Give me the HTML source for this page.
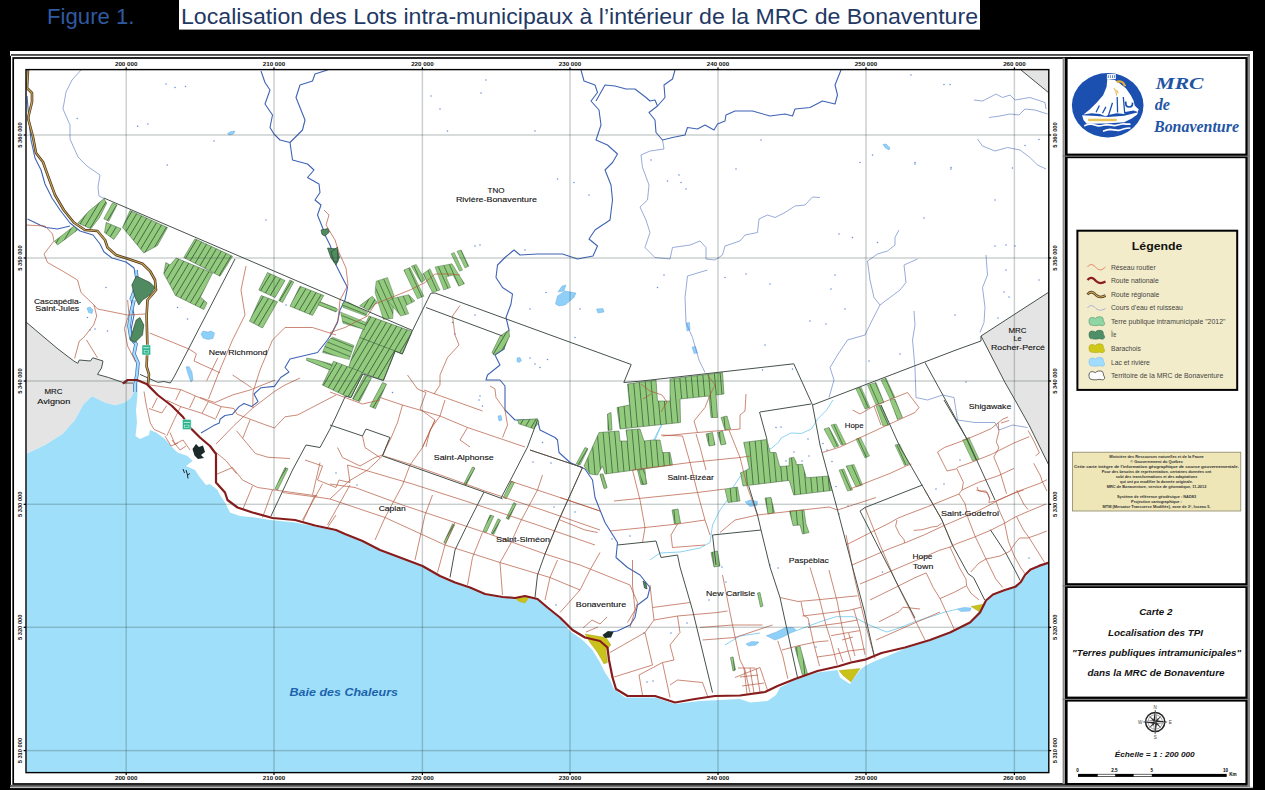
<!DOCTYPE html>
<html><head><meta charset="utf-8"><title>Figure 1</title>
<style>
html,body{margin:0;padding:0;background:#000;}
body{width:1265px;height:790px;overflow:hidden;font-family:"Liberation Sans",sans-serif;}
svg{display:block;position:absolute;left:0;top:0;}
text{font-family:"Liberation Sans",sans-serif;}
.ser{font-family:"Liberation Serif",serif;}
.lbl{font-size:8px;fill:#111;stroke:#111;stroke-width:0.12px;}
.tick{font-size:5px;font-weight:bold;fill:#111;}
.leg{font-size:6.6px;fill:#444;}
.info{font-size:3.9px;fill:#333;text-anchor:middle;}
.bi{font-weight:bold;font-style:italic;}
</style></head><body>
<svg width="1265" height="790" viewBox="0 0 1265 790">
<defs>
<pattern id="pw" width="5.4" height="12" patternUnits="userSpaceOnUse" patternTransform="rotate(31)"><rect width="5.4" height="12" fill="#93cb7e"/><rect width="0.8" height="12" fill="#3d5f3a"/></pattern>
<pattern id="pe" width="5.8" height="12" patternUnits="userSpaceOnUse" patternTransform="rotate(-5)"><rect width="5.8" height="12" fill="#93cb7e"/><rect width="0.8" height="12" fill="#3d5f3a"/></pattern>
<pattern id="ph" width="5.5" height="12" patternUnits="userSpaceOnUse" patternTransform="rotate(-24)"><rect width="5.5" height="12" fill="#93cb7e"/><rect width="0.7" height="12" fill="#3d5f3a"/></pattern>
<pattern id="px" width="5" height="12" patternUnits="userSpaceOnUse" patternTransform="rotate(-68)"><rect width="5" height="12" fill="#93cb7e"/><rect width="0.7" height="12" fill="#3d5f3a"/></pattern>
<clipPath id="mapclip"><rect x="26.5" y="70" width="1022" height="702.5"/></clipPath>
</defs>
<rect x="0" y="0" width="1265" height="790" fill="#000"/>
<g>

<rect x="179" y="0" width="801" height="29.6" fill="#fff"/>
<text x="47" y="23.5" font-size="22" fill="#2f5aa0" textLength="87.5" lengthAdjust="spacingAndGlyphs">Figure 1.</text>
<text x="181" y="23.5" font-size="22" fill="#1f3864" textLength="797" lengthAdjust="spacingAndGlyphs">Localisation des Lots intra-municipaux à l’intérieur de la MRC de Bonaventure</text>
<rect x="10" y="51" width="1243" height="737" fill="#fff"/>
<rect x="10" y="55.8" width="1" height="733" fill="#000"/>
<rect x="11" y="54.2" width="1239" height="1.5" fill="#222"/>
<rect x="10" y="786.8" width="1243" height="1.3" fill="#bbb"/>
<rect x="10" y="784.9" width="1240" height="1.9" fill="#555"/>
<rect x="1247.4" y="56" width="2.6" height="731" fill="#888"/>
<rect x="13.2" y="58" width="1233.4" height="726" fill="none" stroke="#000" stroke-width="1.7"/>
<rect x="1062.6" y="58" width="2.2" height="726" fill="#8a8a8a"/>
<rect x="1065" y="57.2" width="182.4" height="727.6" fill="#000"/>
<rect x="1067.6" y="59" width="177.8" height="94.6" fill="#fff"/>
<rect x="1067.6" y="158.2" width="177.8" height="425.0" fill="#fff"/>
<rect x="1067.6" y="588" width="177.8" height="108.6" fill="#fff"/>
<rect x="1067.6" y="701.6" width="177.8" height="81.4" fill="#fff"/>
<rect x="1062.6" y="155.6" width="187" height="1.2" fill="#777"/>
<rect x="1062.6" y="585.2" width="187" height="1.2" fill="#777"/>
<rect x="1062.6" y="698.8" width="187" height="1.2" fill="#777"/>
<rect x="26" y="69.5" width="1022.8" height="703.2" fill="#fff"/>
<g clip-path="url(#mapclip)">
<polygon points="26.0,322.0 39.0,333.0 58.0,349.0 73.8,361.0 77.8,363.3 79.3,360.0 90.4,361.0 92.8,357.8 103.0,361.0 101.5,368.0 97.5,374.4 108.6,377.5 124.4,383.0 133.0,383.0 134.0,391.8 130.8,398.0 124.4,402.8 115.0,405.2 105.4,402.8 92.0,396.2 83.3,404.4 75.0,420.0 62.5,434.0 45.0,445.0 26.0,454.0" fill="#e4e4e4"/>
<polygon points="981.0,336.0 1049.0,292.0 1049.0,465.5 1029.0,425.0 1015.0,400.0 1005.0,382.5" fill="#e4e4e4"/>
<polygon points="1021.0,70.0 1049.0,70.0 1049.0,93.0" fill="#e4e4e4"/>
<polygon points="26.0,454.0 45.0,445.0 62.5,434.0 75.0,420.0 83.3,404.4 92.0,396.2 105.4,402.8 115.0,405.2 124.4,402.8 130.8,398.0 134.0,391.8 133.0,383.0 137.5,383.0 137.5,395.0 136.0,410.0 137.0,422.5 135.5,436.0 140.0,439.0 149.0,435.0 150.0,430.0 156.0,432.5 165.0,439.0 170.0,445.0 177.5,452.5 187.5,456.0 192.5,461.0 186.0,466.0 195.0,470.0 200.0,477.5 206.0,485.0 210.0,484.0 217.5,490.0 220.0,495.0 225.0,502.5 230.0,512.5 240.0,516.0 255.0,517.5 270.0,520.0 295.0,522.5 320.0,527.5 336.0,531.0 345.0,535.0 362.5,542.0 380.0,551.0 400.0,558.5 422.5,567.0 440.0,577.0 455.0,583.5 470.0,588.5 485.0,595.0 502.5,598.0 515.0,599.0 519.0,601.5 525.0,603.0 530.0,597.0 537.5,600.0 547.5,608.5 560.0,618.5 570.0,631.0 582.5,640.0 592.5,650.0 600.0,662.5 605.0,672.5 610.0,680.0 614.0,689.0 625.0,697.5 655.0,697.5 675.0,704.0 700.0,701.0 740.0,699.0 750.0,702.5 767.5,701.0 776.0,695.0 780.0,687.5 795.0,680.0 817.5,672.5 837.5,670.0 840.0,677.5 850.0,684.0 860.0,670.0 865.0,666.0 874.0,661.5 886.6,656.5 905.0,648.5 930.0,641.0 950.0,633.5 970.0,623.5 979.0,611.0 984.0,604.0 987.0,601.5 993.0,595.5 1004.2,591.3 1015.3,587.8 1021.5,583.0 1026.0,576.0 1031.5,570.4 1039.0,567.0 1049.0,563.5 1049.0,773.0 26.0,773.0" fill="#9fdff9"/>
<polygon points="555.5,304.0 557.5,296.0 565.0,291.0 576.0,293.0 574.0,297.5 565.0,305.0 559.0,306.0" fill="#8fd0f8" stroke="#5a9fe0" stroke-width="0.4"/>
<polygon points="558.0,292.0 562.0,286.0 566.0,285.0 564.0,291.0" fill="#8fd0f8" stroke="#5a9fe0" stroke-width="0.4"/>
<polygon points="201.0,334.0 203.0,331.0 208.0,332.0 211.0,331.0 214.5,333.0 213.0,338.5 208.0,339.5 203.0,338.0" fill="#8fd0f8" stroke="#5a9fe0" stroke-width="0.4"/>
<polygon points="186.0,367.0 189.0,366.5 192.0,372.0 193.0,380.0 191.0,382.0 188.0,374.0" fill="#8fd0f8" stroke="#5a9fe0" stroke-width="0.4"/>
<polygon points="87.0,308.0 90.0,307.0 93.0,310.0 92.0,313.5 88.5,312.5" fill="#8fd0f8" stroke="#5a9fe0" stroke-width="0.4"/>
<polygon points="766.3,635.7 776.5,632.0 785.3,627.5 793.0,627.5 796.7,630.6 790.4,633.0 782.8,637.0 775.0,640.0" fill="#8fd0f8" stroke="#5a9fe0" stroke-width="0.4"/>
<polygon points="746.0,644.0 752.0,641.5 759.0,642.0 756.0,645.0 749.0,646.0" fill="#8fd0f8" stroke="#5a9fe0" stroke-width="0.4"/>
<polygon points="745.0,502.0 750.0,500.0 757.5,501.5 757.0,505.5 750.0,506.5" fill="#8fd0f8" stroke="#5a9fe0" stroke-width="0.4"/>
<polygon points="957.5,609.0 964.0,607.5 971.0,608.0 970.0,611.0 961.0,611.5" fill="#8fd0f8" stroke="#5a9fe0" stroke-width="0.4"/>
<polygon points="517.0,358.0 520.0,357.5 521.5,360.5 519.5,362.5 517.0,361.5" fill="#8fd0f8" stroke="#5a9fe0" stroke-width="0.4"/>
<polygon points="596.5,309.0 603.0,308.5 604.0,312.0 598.0,313.0" fill="#8fd0f8" stroke="#5a9fe0" stroke-width="0.4"/>
<polygon points="498.0,416.0 501.0,415.5 502.0,420.0 499.0,421.0" fill="#8fd0f8" stroke="#5a9fe0" stroke-width="0.4"/>
<polygon points="227.5,133.5 231.0,131.5 235.0,131.0 233.5,134.0 229.0,135.0" fill="#8fd0f8" stroke="#5a9fe0" stroke-width="0.4"/>
<polygon points="883.0,144.5 886.0,144.0 890.0,148.0 889.0,150.0 885.0,147.5" fill="#8fd0f8" stroke="#5a9fe0" stroke-width="0.4"/>
<polygon points="686.0,323.0 689.5,322.5 690.0,330.0 687.0,331.0" fill="#8fd0f8" stroke="#5a9fe0" stroke-width="0.4"/>
<polygon points="692.0,347.0 695.5,346.5 697.5,353.0 694.0,353.5" fill="#8fd0f8" stroke="#5a9fe0" stroke-width="0.4"/>
<polyline points="680.0,400.0 660.0,427.5 652.5,442.5 632.5,455.0 597.5,460.0 585.0,465.0" fill="none" stroke="#6fc8ee" stroke-width="0.8"/>
<polyline points="833.0,400.0 826.6,410.0 817.7,419.0 811.4,429.0 801.3,433.5 791.0,433.0 781.0,438.0 779.0,441.8 771.0,448.7 759.5,450.6 753.0,464.6 745.6,471.0 740.5,476.0 733.0,487.3 730.4,496.0 720.0,510.0 712.5,525.0 710.0,542.5 700.0,548.0 680.0,552.0 660.0,553.0 650.0,560.0" fill="none" stroke="#6fc8ee" stroke-width="0.8"/>
<polyline points="677.5,390.0 675.0,407.5 662.5,422.5 655.0,440.0" fill="none" stroke="#6fc8ee" stroke-width="0.8"/>
<polyline points="796.7,630.6 810.0,625.5 820.0,621.8 836.0,616.7 853.7,616.7 867.6,624.3 886.6,632.0 899.2,628.0 914.4,621.8 930.0,617.0 945.0,612.0 958.0,609.0" fill="none" stroke="#6fc8ee" stroke-width="0.8"/>
<polyline points="760.0,633.0 740.0,636.0 725.0,645.0" fill="none" stroke="#6fc8ee" stroke-width="0.8"/>
<polyline points="81.0,70.0 72.0,80.0 66.0,92.0 63.0,109.0 70.0,125.0 70.0,139.0 78.0,157.0 87.0,166.0 100.0,175.0 98.0,187.0 99.0,196.0 105.0,199.0" fill="none" stroke="#6b86c8" stroke-width="0.7"/>
<polyline points="662.5,140.0 664.0,149.0 650.0,151.0 641.0,155.0 642.5,167.5 649.0,185.0 647.5,200.0 640.0,207.0 646.0,220.0 650.0,232.5 645.0,247.5 655.0,257.5 670.0,259.0 672.5,247.5 690.0,245.0 700.0,241.0 706.0,247.5 706.0,259.0 715.0,260.0 722.5,255.0 725.0,246.0 740.0,241.0 745.0,235.0 757.5,232.5 759.0,219.0 767.5,215.0 775.0,217.5 785.0,212.5 795.0,206.0 805.0,205.0 812.5,197.0 820.0,197.5" fill="none" stroke="#6b86c8" stroke-width="0.7"/>
<polyline points="899.0,230.0 895.0,237.5 895.0,245.0 887.5,251.0 877.5,254.0 867.5,261.0 870.0,280.0 874.0,297.5 880.0,305.0 871.0,322.5 865.0,335.0 847.5,340.0 837.5,355.0 830.0,367.5 834.0,380.0 829.0,397.5" fill="none" stroke="#6b86c8" stroke-width="0.7"/>
<polyline points="917.5,259.0 904.0,265.0 906.0,282.5 900.0,290.0 880.0,305.0" fill="none" stroke="#6b86c8" stroke-width="0.7"/>
<polyline points="914.0,311.0 915.0,325.0 912.5,340.0 915.0,367.5 916.0,397.5 927.5,400.0 942.5,395.0 954.0,397.5 957.5,420.0 975.0,422.5 995.0,422.5 999.0,430.0 1012.5,425.0 1027.5,427.5" fill="none" stroke="#6b86c8" stroke-width="0.7"/>
<polyline points="986.0,255.0 987.5,275.0 982.5,287.5 985.0,307.5 984.0,322.5 980.0,332.5" fill="none" stroke="#6b86c8" stroke-width="0.7"/>
<polyline points="707.5,270.0 687.5,276.0 685.0,297.5 686.0,322.5 692.5,337.5 699.0,360.0 705.0,372.5" fill="none" stroke="#6b86c8" stroke-width="0.7"/>
<polyline points="974.0,100.0 982.5,101.0 996.0,94.0 1002.5,97.5 1010.0,95.0 1015.0,100.0 1030.0,97.5 1045.0,102.5 1046.0,109.0" fill="none" stroke="#6b86c8" stroke-width="0.7"/>
<polyline points="989.0,117.5 1000.0,116.0 1010.0,114.0 1019.0,115.0 1025.0,109.0 1035.0,110.0 1047.5,114.0" fill="none" stroke="#6b86c8" stroke-width="0.7"/>
<polyline points="977.5,139.0 982.5,146.0 995.0,151.0 1007.5,147.5 1020.0,150.0 1030.0,157.5 1037.5,165.0 1046.0,169.0" fill="none" stroke="#6b86c8" stroke-width="0.7"/>
<polyline points="27.0,96.0 29.0,120.0 31.0,140.0 35.0,158.0 41.0,170.0 45.0,184.0 52.0,198.0 60.0,210.0 70.0,223.0 80.0,231.0 93.0,235.0 100.0,244.0 104.0,252.0 112.0,258.0 126.0,262.0 134.0,268.0 136.0,278.0 134.0,290.0 131.0,300.0 134.0,315.0 131.0,330.0 136.0,344.0 134.0,354.0 138.0,363.0 137.0,374.0 135.0,384.0" fill="none" stroke="#3f63b5" stroke-width="1.1" stroke-linejoin="round"/>
<polyline points="27.5,219.0 40.0,225.0 46.0,227.5 57.5,229.0 70.0,226.0" fill="none" stroke="#3f63b5" stroke-width="1.1" stroke-linejoin="round"/>
<polyline points="261.0,71.0 265.0,82.5 270.0,90.0 265.0,104.0 272.5,115.0 270.0,127.5 274.0,134.0 280.0,140.0 290.0,142.5" fill="none" stroke="#3f63b5" stroke-width="1.1" stroke-linejoin="round"/>
<polyline points="327.5,70.0 315.0,74.0 312.5,81.0 300.0,85.0 296.0,97.5 301.0,110.0 305.0,120.0 302.5,130.0 295.0,137.5 290.0,142.5 292.5,160.0 307.5,164.0 314.0,170.0 307.5,177.5 319.0,184.0 320.0,192.5 315.0,200.0 321.0,205.0 317.5,215.0 322.5,227.5 325.0,235.0 330.0,245.0 334.0,257.0 336.0,265.0 341.0,275.0 347.5,287.5 345.0,300.0 340.0,310.0 337.5,322.5 332.5,332.0 327.5,340.0 317.5,352.5 290.0,359.0 285.0,367.5 289.0,372.0 280.7,377.5 274.4,386.4 261.0,387.7 254.0,394.0 258.0,401.6 251.6,406.6 244.0,403.5 239.0,406.6 232.6,414.2 225.0,415.5 220.0,419.3 219.3,423.0 213.6,425.6 201.0,433.0" fill="none" stroke="#3f63b5" stroke-width="1.1" stroke-linejoin="round"/>
<polyline points="581.0,70.0 584.0,81.0 595.0,85.0 597.5,92.5 591.0,101.0 599.0,110.0 601.0,125.0 596.0,140.0 607.5,145.0 617.5,154.0 612.5,162.5 605.0,170.0 611.0,185.0 612.5,200.0 610.0,220.0 595.0,230.0 589.0,239.0 597.5,246.0 593.0,256.0 577.5,259.0 562.5,254.0 537.5,254.0 520.0,255.0 514.0,250.0 505.0,257.5 497.5,265.0 496.0,277.5 502.5,287.5 512.5,294.0 511.0,304.0 506.0,317.5 509.0,330.0 504.0,349.0 495.0,355.0 500.0,365.0 487.5,375.0 486.0,380.0 500.0,380.0 505.0,386.0 505.0,410.0 515.0,420.0 537.5,420.0 540.0,430.0 555.0,437.5 557.5,440.0 559.0,452.5 570.0,462.5 585.0,469.0 592.5,480.0 595.0,497.5 605.0,522.5 617.5,542.5 616.0,557.5 627.5,567.5 640.0,575.0 646.0,582.5 650.0,587.5 647.5,597.5 637.5,605.0 635.0,617.5 630.0,625.0 617.5,631.0 610.0,632.0" fill="none" stroke="#3f63b5" stroke-width="1.1" stroke-linejoin="round"/>
<polyline points="596.0,101.0 605.0,85.0 615.0,86.0 626.0,89.0 635.0,89.0 646.0,97.5 650.0,101.0 655.0,100.0 657.5,106.0 649.0,112.5 655.0,120.0 656.0,132.5 662.5,140.0 672.5,137.5 685.0,135.0 687.5,127.5 697.5,129.0 705.0,125.0 714.0,130.0 717.5,124.0 725.0,121.0 726.0,115.0 735.0,111.0 752.5,111.0 770.0,116.0 785.0,114.0 792.5,116.0 795.0,109.0 810.0,107.5 822.5,101.0 835.0,104.0 837.5,95.0 835.0,85.0 841.0,70.0" fill="none" stroke="#3f63b5" stroke-width="1.1" stroke-linejoin="round"/>
<polyline points="675.0,70.0 672.5,79.0 664.0,85.0 665.0,97.5 657.5,106.0" fill="none" stroke="#3f63b5" stroke-width="1.1" stroke-linejoin="round"/>
<circle cx="137.6" cy="126.3" r="0.75" fill="#5f8ad8"/>
<circle cx="147.9" cy="124" r="0.75" fill="#5f8ad8"/>
<circle cx="167.2" cy="165" r="0.75" fill="#5f8ad8"/>
<circle cx="77.2" cy="118.4" r="0.75" fill="#5f8ad8"/>
<circle cx="214" cy="141" r="0.75" fill="#5f8ad8"/>
<circle cx="185.5" cy="86.5" r="0.75" fill="#5f8ad8"/>
<circle cx="175" cy="87.6" r="0.75" fill="#5f8ad8"/>
<circle cx="166" cy="84" r="0.75" fill="#5f8ad8"/>
<circle cx="431" cy="96" r="0.75" fill="#5f8ad8"/>
<circle cx="440" cy="109" r="0.75" fill="#5f8ad8"/>
<circle cx="447.5" cy="131" r="0.75" fill="#5f8ad8"/>
<circle cx="486" cy="80" r="0.75" fill="#5f8ad8"/>
<circle cx="481" cy="93" r="0.75" fill="#5f8ad8"/>
<circle cx="535" cy="131" r="0.75" fill="#5f8ad8"/>
<circle cx="557.5" cy="179" r="0.75" fill="#5f8ad8"/>
<circle cx="574" cy="182.5" r="0.75" fill="#5f8ad8"/>
<circle cx="589" cy="195" r="0.75" fill="#5f8ad8"/>
<circle cx="475" cy="246" r="0.75" fill="#5f8ad8"/>
<circle cx="480" cy="245" r="0.75" fill="#5f8ad8"/>
<circle cx="525" cy="250" r="0.75" fill="#5f8ad8"/>
<circle cx="736" cy="169" r="0.75" fill="#5f8ad8"/>
<circle cx="679" cy="175" r="0.75" fill="#5f8ad8"/>
<circle cx="681" cy="182.5" r="0.75" fill="#5f8ad8"/>
<circle cx="686" cy="189" r="0.75" fill="#5f8ad8"/>
<circle cx="667.5" cy="181" r="0.75" fill="#5f8ad8"/>
<circle cx="651" cy="160" r="0.75" fill="#5f8ad8"/>
<circle cx="761" cy="140" r="0.75" fill="#5f8ad8"/>
<circle cx="860" cy="162.5" r="0.75" fill="#5f8ad8"/>
<circle cx="872.5" cy="155" r="0.75" fill="#5f8ad8"/>
<circle cx="915" cy="162.5" r="0.75" fill="#5f8ad8"/>
<circle cx="951" cy="167.5" r="0.75" fill="#5f8ad8"/>
<circle cx="924" cy="218" r="0.75" fill="#5f8ad8"/>
<circle cx="839" cy="234" r="0.75" fill="#5f8ad8"/>
<circle cx="852.5" cy="237.5" r="0.75" fill="#5f8ad8"/>
<circle cx="877.5" cy="242.5" r="0.75" fill="#5f8ad8"/>
<circle cx="911" cy="75" r="0.75" fill="#5f8ad8"/>
<circle cx="944" cy="84.5" r="0.75" fill="#5f8ad8"/>
<circle cx="950" cy="84.5" r="0.75" fill="#5f8ad8"/>
<circle cx="1025" cy="145.5" r="0.75" fill="#5f8ad8"/>
<circle cx="1039" cy="139.5" r="0.75" fill="#5f8ad8"/>
<circle cx="1012.5" cy="168" r="0.75" fill="#5f8ad8"/>
<circle cx="951" cy="169" r="0.75" fill="#5f8ad8"/>
<circle cx="915" cy="164" r="0.75" fill="#5f8ad8"/>
<circle cx="995" cy="200" r="0.75" fill="#5f8ad8"/>
<circle cx="995" cy="246" r="0.75" fill="#5f8ad8"/>
<circle cx="1006" cy="245" r="0.75" fill="#5f8ad8"/>
<circle cx="1015" cy="246" r="0.75" fill="#5f8ad8"/>
<circle cx="475" cy="315" r="0.75" fill="#5f8ad8"/>
<circle cx="452.5" cy="322.5" r="0.75" fill="#5f8ad8"/>
<circle cx="455" cy="334" r="0.75" fill="#5f8ad8"/>
<circle cx="530" cy="309" r="0.75" fill="#5f8ad8"/>
<circle cx="546" cy="292.5" r="0.75" fill="#5f8ad8"/>
<circle cx="580" cy="309" r="0.75" fill="#5f8ad8"/>
<circle cx="535" cy="364" r="0.75" fill="#5f8ad8"/>
<circle cx="540" cy="367.5" r="0.75" fill="#5f8ad8"/>
<circle cx="547.5" cy="359.5" r="0.75" fill="#5f8ad8"/>
<circle cx="530" cy="358" r="0.75" fill="#5f8ad8"/>
<circle cx="575" cy="337.5" r="0.75" fill="#5f8ad8"/>
<circle cx="480" cy="396" r="0.75" fill="#5f8ad8"/>
<circle cx="479" cy="400" r="0.75" fill="#5f8ad8"/>
<circle cx="482.5" cy="406" r="0.75" fill="#5f8ad8"/>
<circle cx="392.5" cy="392.5" r="0.75" fill="#5f8ad8"/>
<circle cx="542.5" cy="442.5" r="0.75" fill="#5f8ad8"/>
<circle cx="664" cy="275" r="0.75" fill="#5f8ad8"/>
<circle cx="657.5" cy="287.5" r="0.75" fill="#5f8ad8"/>
<circle cx="746" cy="274" r="0.75" fill="#5f8ad8"/>
<circle cx="725" cy="277.5" r="0.75" fill="#5f8ad8"/>
<circle cx="770" cy="284" r="0.75" fill="#5f8ad8"/>
<circle cx="835" cy="275" r="0.75" fill="#5f8ad8"/>
<circle cx="831" cy="289" r="0.75" fill="#5f8ad8"/>
<circle cx="845" cy="309" r="0.75" fill="#5f8ad8"/>
<circle cx="810" cy="321" r="0.75" fill="#5f8ad8"/>
<circle cx="826" cy="324" r="0.75" fill="#5f8ad8"/>
<circle cx="765" cy="345" r="0.75" fill="#5f8ad8"/>
<circle cx="900" cy="354" r="0.75" fill="#5f8ad8"/>
<circle cx="869" cy="361" r="0.75" fill="#5f8ad8"/>
<circle cx="792.5" cy="369" r="0.75" fill="#5f8ad8"/>
<circle cx="762.5" cy="370" r="0.75" fill="#5f8ad8"/>
<circle cx="266" cy="220" r="0.75" fill="#5f8ad8"/>
<circle cx="106" cy="287.5" r="0.75" fill="#5f8ad8"/>
<circle cx="177.5" cy="307.5" r="0.75" fill="#5f8ad8"/>
<circle cx="187.5" cy="319" r="0.75" fill="#5f8ad8"/>
<circle cx="286" cy="305" r="0.75" fill="#5f8ad8"/>
<circle cx="107.5" cy="331" r="0.75" fill="#5f8ad8"/>
<circle cx="95" cy="329" r="0.75" fill="#5f8ad8"/>
<circle cx="90" cy="330" r="0.75" fill="#5f8ad8"/>
<circle cx="87.5" cy="317.5" r="0.75" fill="#5f8ad8"/>
<circle cx="1006" cy="270" r="0.75" fill="#5f8ad8"/>
<circle cx="1039" cy="280" r="0.75" fill="#5f8ad8"/>
<circle cx="1004" cy="292" r="0.75" fill="#5f8ad8"/>
<circle cx="1009" cy="297" r="0.75" fill="#5f8ad8"/>
<circle cx="998" cy="318" r="0.75" fill="#5f8ad8"/>
<circle cx="955" cy="315" r="0.75" fill="#5f8ad8"/>
<circle cx="966" cy="382" r="0.75" fill="#5f8ad8"/>
<circle cx="781" cy="427" r="0.75" fill="#5f8ad8"/>
<circle cx="776" cy="427.5" r="0.75" fill="#5f8ad8"/>
<circle cx="808" cy="439" r="0.75" fill="#5f8ad8"/>
<circle cx="794" cy="452" r="0.75" fill="#5f8ad8"/>
<circle cx="809" cy="456" r="0.75" fill="#5f8ad8"/>
<circle cx="786" cy="461" r="0.75" fill="#5f8ad8"/>
<circle cx="802" cy="461" r="0.75" fill="#5f8ad8"/>
<circle cx="836" cy="486.5" r="0.75" fill="#5f8ad8"/>
<circle cx="823" cy="443.5" r="0.75" fill="#5f8ad8"/>
<circle cx="827" cy="450" r="0.75" fill="#5f8ad8"/>
<circle cx="832" cy="461.5" r="0.75" fill="#5f8ad8"/>
<circle cx="848" cy="506" r="0.75" fill="#5f8ad8"/>
<circle cx="839" cy="514" r="0.75" fill="#5f8ad8"/>
<circle cx="770" cy="565" r="0.75" fill="#5f8ad8"/>
<circle cx="778" cy="568" r="0.75" fill="#5f8ad8"/>
<circle cx="722" cy="567" r="0.75" fill="#5f8ad8"/>
<circle cx="726" cy="582" r="0.75" fill="#5f8ad8"/>
<circle cx="709" cy="600" r="0.75" fill="#5f8ad8"/>
<circle cx="687" cy="623" r="0.75" fill="#5f8ad8"/>
<circle cx="671" cy="633" r="0.75" fill="#5f8ad8"/>
<circle cx="644" cy="633" r="0.75" fill="#5f8ad8"/>
<circle cx="647" cy="682" r="0.75" fill="#5f8ad8"/>
<circle cx="653" cy="681" r="0.75" fill="#5f8ad8"/>
<circle cx="816" cy="647" r="0.75" fill="#5f8ad8"/>
<circle cx="809" cy="624" r="0.75" fill="#5f8ad8"/>
<circle cx="882.5" cy="572" r="0.75" fill="#5f8ad8"/>
<circle cx="960" cy="460" r="0.75" fill="#5f8ad8"/>
<circle cx="936" cy="489" r="0.75" fill="#5f8ad8"/>
<circle cx="944" cy="484" r="0.75" fill="#5f8ad8"/>
<circle cx="1029" cy="558" r="0.75" fill="#5f8ad8"/>
<circle cx="357" cy="485" r="0.75" fill="#5f8ad8"/>
<circle cx="336" cy="473" r="0.75" fill="#5f8ad8"/>
<circle cx="551" cy="463" r="0.75" fill="#5f8ad8"/>
<circle cx="533" cy="462" r="0.75" fill="#5f8ad8"/>
<circle cx="554" cy="507" r="0.75" fill="#5f8ad8"/>
<circle cx="575" cy="512" r="0.75" fill="#5f8ad8"/>
<circle cx="630" cy="536" r="0.75" fill="#5f8ad8"/>
<circle cx="556" cy="605" r="0.75" fill="#5f8ad8"/>
<circle cx="612" cy="539" r="0.75" fill="#5f8ad8"/>
<polyline points="134.0,300.0 131.0,312.0 129.0,326.0 131.0,338.0 136.0,344.0 134.0,354.0 138.0,363.0 137.0,374.0 135.0,385.0 135.0,392.0" fill="none" stroke="#4468b8" stroke-width="3.6" stroke-linejoin="round"/>
<polyline points="134.0,300.0 131.0,312.0 129.0,326.0 131.0,338.0 136.0,344.0 134.0,354.0 138.0,363.0 137.0,374.0 135.0,385.0 135.0,392.0" fill="none" stroke="#9fdff9" stroke-width="2.2" stroke-linejoin="round"/>
<polyline points="136.0,270.0 137.0,280.0 134.0,292.0 131.0,300.0" fill="none" stroke="#4468b8" stroke-width="3.6" stroke-linejoin="round"/>
<polyline points="136.0,270.0 137.0,280.0 134.0,292.0 131.0,300.0" fill="none" stroke="#9fdff9" stroke-width="2.2" stroke-linejoin="round"/>
<polygon points="103.8,198.8 106.8,203.0 99.5,217.5 90.8,228.8 78.0,223.0 88.8,211.2" fill="url(#pw)" stroke="#3d5f3a" stroke-width="0.5"/>
<polygon points="73.8,226.2 77.5,230.0 57.5,245.0 54.5,241.2" fill="url(#pw)" stroke="#3d5f3a" stroke-width="0.5"/>
<polygon points="112.5,203.0 117.0,205.0 108.8,221.2 103.8,218.8" fill="url(#pw)" stroke="#3d5f3a" stroke-width="0.5"/>
<polygon points="106.2,222.5 121.2,228.8 113.8,239.5 104.5,232.5" fill="url(#pw)" stroke="#3d5f3a" stroke-width="0.5"/>
<polygon points="130.0,210.5 167.5,227.5 157.5,245.5 143.8,253.0 130.0,236.2 122.5,227.5" fill="url(#pw)" stroke="#3d5f3a" stroke-width="0.5"/>
<polygon points="195.0,238.8 232.5,256.2 220.0,276.2 183.8,257.5" fill="url(#pw)" stroke="#3d5f3a" stroke-width="0.5"/>
<polygon points="176.2,258.0 212.5,273.0 200.5,297.0 207.0,303.0 203.8,309.5 175.5,295.5 170.0,285.0 163.8,273.8 165.8,262.5 170.0,265.0" fill="url(#pw)" stroke="#3d5f3a" stroke-width="0.5"/>
<polygon points="267.5,272.5 285.0,280.5 275.0,297.5 258.8,290.0" fill="url(#pw)" stroke="#3d5f3a" stroke-width="0.5"/>
<polygon points="261.2,295.5 277.5,301.8 262.5,328.0 249.5,321.2" fill="url(#pw)" stroke="#3d5f3a" stroke-width="0.5"/>
<polygon points="290.0,280.0 293.8,282.0 282.5,302.5 278.8,300.5" fill="url(#pw)" stroke="#3d5f3a" stroke-width="0.5"/>
<polygon points="300.0,286.2 323.8,295.5 312.5,315.5 290.0,306.2" fill="url(#pw)" stroke="#3d5f3a" stroke-width="0.5"/>
<polygon points="320.0,301.8 336.0,308.0 336.0,312.0 318.8,305.0" fill="url(#pw)" stroke="#3d5f3a" stroke-width="0.5"/>
<polygon points="369.0,316.0 412.0,331.5 402.3,354.0 359.6,337.5" fill="url(#pw)" stroke="#3d5f3a" stroke-width="0.5"/>
<polygon points="359.6,337.5 395.2,351.0 383.4,380.5 348.5,367.5 353.3,353.3" fill="url(#pw)" stroke="#3d5f3a" stroke-width="0.5"/>
<polygon points="333.5,361.2 360.4,371.5 362.8,373.9 351.0,397.6 345.4,396.0 322.4,385.0" fill="url(#pw)" stroke="#3d5f3a" stroke-width="0.5"/>
<polygon points="364.4,375.4 371.5,377.8 359.6,401.6 352.5,398.9" fill="url(#pw)" stroke="#3d5f3a" stroke-width="0.5"/>
<polygon points="382.6,382.6 386.5,384.1 375.4,408.7 369.9,406.3" fill="url(#pw)" stroke="#3d5f3a" stroke-width="0.5"/>
<polygon points="359.6,305.8 372.3,296.3 377.0,301.9 369.0,310.6" fill="url(#pw)" stroke="#3d5f3a" stroke-width="0.5"/>
<polygon points="500.0,336.2 508.8,330.0 509.5,336.2 503.8,348.8 493.8,355.0 492.0,352.5" fill="url(#pw)" stroke="#3d5f3a" stroke-width="0.5"/>
<polygon points="517.5,420.0 537.5,418.8 538.8,422.5 533.8,428.8 518.8,423.8" fill="url(#pw)" stroke="#3d5f3a" stroke-width="0.5"/>
<polygon points="472.5,467.0 475.0,468.0 466.2,485.0 463.8,484.0" fill="url(#pw)" stroke="#3d5f3a" stroke-width="0.5"/>
<polygon points="511.2,481.2 514.5,482.5 506.2,498.8 503.2,497.5" fill="url(#pw)" stroke="#3d5f3a" stroke-width="0.5"/>
<polygon points="513.8,502.5 516.2,503.8 508.8,519.5 506.2,518.2" fill="url(#pw)" stroke="#3d5f3a" stroke-width="0.5"/>
<polygon points="490.0,515.0 493.8,516.2 486.2,532.5 483.0,531.2" fill="url(#pw)" stroke="#3d5f3a" stroke-width="0.5"/>
<polygon points="498.0,518.8 500.5,520.0 493.8,534.5 491.2,533.2" fill="url(#pw)" stroke="#3d5f3a" stroke-width="0.5"/>
<polygon points="452.5,523.8 454.5,525.0 445.5,543.8 443.8,542.5" fill="url(#pw)" stroke="#3d5f3a" stroke-width="0.5"/>
<polygon points="285.0,467.5 288.0,468.8 277.5,490.0 275.0,488.8" fill="url(#pw)" stroke="#3d5f3a" stroke-width="0.5"/>
<polygon points="585.0,447.5 588.0,448.8 580.0,465.0 576.2,463.8" fill="url(#pw)" stroke="#3d5f3a" stroke-width="0.5"/>
<polygon points="627.5,384.0 656.0,380.0 657.5,401.0 670.0,401.0 670.0,379.0 722.5,372.5 724.0,394.0 716.0,395.0 717.5,417.5 711.0,417.5 709.0,396.0 680.0,399.0 680.5,422.5 620.0,429.0 617.0,407.5 629.5,405.0" fill="url(#pe)" stroke="#3d5f3a" stroke-width="0.5"/>
<polygon points="607.5,414.0 611.0,412.5 612.0,430.0 608.0,430.5" fill="url(#pe)" stroke="#3d5f3a" stroke-width="0.5"/>
<polygon points="599.0,432.5 619.0,431.0 620.0,441.0 627.5,441.0 626.0,430.0 640.0,429.0 644.0,441.0 652.5,440.0 660.0,440.0 662.5,452.5 670.0,452.5 672.5,465.0 605.0,474.0 602.5,466.0 597.5,475.0 590.0,474.0 584.0,466.0 590.0,452.5" fill="url(#pe)" stroke="#3d5f3a" stroke-width="0.5"/>
<polygon points="637.5,470.0 644.0,469.5 647.0,484.0 641.0,484.5" fill="url(#pe)" stroke="#3d5f3a" stroke-width="0.5"/>
<polygon points="600.0,474.5 603.0,474.0 607.0,487.5 604.0,488.0" fill="url(#pe)" stroke="#3d5f3a" stroke-width="0.5"/>
<polygon points="706.0,434.0 712.5,432.5 715.0,445.0 709.0,446.0" fill="url(#pe)" stroke="#3d5f3a" stroke-width="0.5"/>
<polygon points="717.5,432.5 722.5,431.0 726.0,444.0 721.0,445.0" fill="url(#pe)" stroke="#3d5f3a" stroke-width="0.5"/>
<polygon points="721.0,417.5 727.0,416.0 730.5,429.0 725.0,430.0" fill="url(#pe)" stroke="#3d5f3a" stroke-width="0.5"/>
<polygon points="743.7,442.4 767.0,439.5 769.0,448.0 770.3,452.5 776.0,452.5 779.7,466.5 789.2,465.8 789.2,458.2 793.7,457.2 796.2,462.0 796.2,464.6 802.5,464.3 806.3,477.8 828.5,476.0 831.6,490.5 793.7,495.0 789.2,480.4 743.0,486.0 740.5,472.8 749.4,469.0" fill="url(#pe)" stroke="#3d5f3a" stroke-width="0.5"/>
<polygon points="725.0,489.0 737.5,487.0 740.0,501.0 728.0,502.5" fill="url(#pe)" stroke="#3d5f3a" stroke-width="0.5"/>
<polygon points="765.0,498.0 771.0,497.5 774.5,512.5 768.0,514.0" fill="url(#pe)" stroke="#3d5f3a" stroke-width="0.5"/>
<polygon points="789.5,511.0 804.0,510.0 806.0,524.0 809.0,532.5 802.5,534.0 800.0,525.0 793.0,525.5" fill="url(#pe)" stroke="#3d5f3a" stroke-width="0.5"/>
<polygon points="672.0,510.0 678.0,509.0 680.5,523.0 674.5,524.0" fill="url(#pe)" stroke="#3d5f3a" stroke-width="0.5"/>
<polygon points="711.0,552.5 717.5,551.0 720.0,566.0 714.0,567.0" fill="url(#pe)" stroke="#3d5f3a" stroke-width="0.5"/>
<polygon points="757.5,593.0 760.0,592.5 763.0,606.0 760.5,607.0" fill="url(#pe)" stroke="#3d5f3a" stroke-width="0.5"/>
<polygon points="730.5,657.5 733.0,657.0 735.5,670.0 733.0,671.0" fill="url(#pe)" stroke="#3d5f3a" stroke-width="0.5"/>
<polygon points="795.0,647.5 800.0,646.0 807.5,674.0 802.5,675.5" fill="url(#pe)" stroke="#3d5f3a" stroke-width="0.5"/>
<polygon points="376.2,281.2 387.5,277.5 393.8,295.0 392.8,318.5 383.4,319.3 375.0,292.5" fill="url(#ph)" stroke="#3d5f3a" stroke-width="0.4"/>
<polygon points="388.0,301.0 394.4,297.9 408.7,294.7 415.0,301.0 405.5,305.8 408.7,313.7 400.8,316.0" fill="url(#ph)" stroke="#3d5f3a" stroke-width="0.4"/>
<polygon points="403.8,270.0 410.0,267.5 423.8,296.2 417.5,298.8" fill="url(#ph)" stroke="#3d5f3a" stroke-width="0.4"/>
<polygon points="411.2,266.2 416.2,264.5 425.0,280.0 421.2,282.5" fill="url(#ph)" stroke="#3d5f3a" stroke-width="0.4"/>
<polygon points="423.0,273.8 430.0,268.8 440.0,290.0 432.5,292.5" fill="url(#ph)" stroke="#3d5f3a" stroke-width="0.4"/>
<polygon points="435.0,267.0 452.0,263.8 464.5,283.8 458.8,286.2 453.0,275.0 446.2,277.0 450.5,287.5 443.8,290.0" fill="url(#ph)" stroke="#3d5f3a" stroke-width="0.4"/>
<polygon points="451.2,253.8 454.2,252.5 462.5,270.0 459.5,271.2" fill="url(#ph)" stroke="#3d5f3a" stroke-width="0.4"/>
<polygon points="457.0,251.2 461.2,250.0 468.8,266.2 465.0,268.0" fill="url(#ph)" stroke="#3d5f3a" stroke-width="0.4"/>
<polygon points="856.0,389.0 861.0,387.0 870.0,407.5 865.0,409.0" fill="url(#ph)" stroke="#3d5f3a" stroke-width="0.4"/>
<polygon points="867.5,385.0 876.0,382.5 884.0,402.5 876.0,405.0" fill="url(#ph)" stroke="#3d5f3a" stroke-width="0.4"/>
<polygon points="876.0,406.0 881.0,405.0 889.0,425.0 883.0,426.0" fill="url(#ph)" stroke="#3d5f3a" stroke-width="0.4"/>
<polygon points="881.0,380.0 886.0,378.0 895.0,397.5 890.0,399.0" fill="url(#ph)" stroke="#3d5f3a" stroke-width="0.4"/>
<polygon points="890.0,400.0 895.0,399.0 902.5,417.5 897.5,419.5" fill="url(#ph)" stroke="#3d5f3a" stroke-width="0.4"/>
<polygon points="824.0,429.0 829.0,427.5 839.0,446.0 834.0,447.5" fill="url(#ph)" stroke="#3d5f3a" stroke-width="0.4"/>
<polygon points="831.0,425.0 836.0,424.0 846.0,444.0 841.0,445.0" fill="url(#ph)" stroke="#3d5f3a" stroke-width="0.4"/>
<polygon points="856.0,439.0 860.5,437.5 869.5,456.0 865.0,458.0" fill="url(#ph)" stroke="#3d5f3a" stroke-width="0.4"/>
<polygon points="895.0,445.0 899.5,444.0 909.0,464.0 904.5,465.5" fill="url(#ph)" stroke="#3d5f3a" stroke-width="0.4"/>
<polygon points="839.0,470.0 844.0,469.0 852.5,490.0 847.5,491.0" fill="url(#ph)" stroke="#3d5f3a" stroke-width="0.4"/>
<polygon points="846.0,466.0 854.0,464.5 862.5,485.0 856.0,487.0" fill="url(#ph)" stroke="#3d5f3a" stroke-width="0.4"/>
<polygon points="962.5,440.0 969.0,437.5 979.0,459.0 972.5,461.0" fill="url(#ph)" stroke="#3d5f3a" stroke-width="0.4"/>
<polygon points="639.0,470.0 645.0,469.0 646.0,484.0 642.5,484.5" fill="url(#ph)" stroke="#3d5f3a" stroke-width="0.4"/>
<polygon points="329.6,339.0 332.7,337.2 354.0,345.4 349.3,359.6 322.4,352.5 325.6,344.6" fill="url(#px)" stroke="#3d5f3a" stroke-width="0.4"/>
<polygon points="306.6,358.0 315.3,359.6 332.7,364.4 329.6,370.0 306.6,360.4" fill="url(#px)" stroke="#3d5f3a" stroke-width="0.4"/>
<polygon points="342.2,303.4 347.8,301.9 367.5,312.2 366.0,316.0 343.0,307.4" fill="url(#px)" stroke="#3d5f3a" stroke-width="0.4"/>
<polygon points="340.6,312.2 344.6,313.7 366.0,322.4 364.4,329.6 343.0,323.2" fill="url(#px)" stroke="#3d5f3a" stroke-width="0.4"/>
<polygon points="319.3,301.9 337.5,309.0 336.7,311.4 318.5,305.0" fill="url(#px)" stroke="#3d5f3a" stroke-width="0.4"/>
<polygon points="600.0,474.0 602.5,474.0 607.0,487.5 604.5,489.0" fill="#93cb7e" stroke="#3d5f3a" stroke-width="0.4"/>
<polygon points="220.0,660.0 220.0,660.0 220.0,660.0" fill="#93cb7e" stroke="#3d5f3a" stroke-width="0.4"/>
<polygon points="136.3,276.0 150.0,282.5 155.0,287.5 150.0,295.0 142.5,300.0 138.8,305.0 135.0,297.5 131.8,285.0" fill="#4f8a60" stroke="#1f3a2a" stroke-width="0.6"/>
<polygon points="140.0,317.5 143.8,325.0 142.5,335.0 135.0,342.5 130.0,340.0 133.8,327.5 136.2,320.0" fill="#4f8a60" stroke="#1f3a2a" stroke-width="0.6"/>
<polygon points="321.0,230.0 328.0,228.5 329.5,232.0 325.0,236.0 322.0,234.5" fill="#4f8a60" stroke="#1f3a2a" stroke-width="0.6"/>
<polygon points="327.5,248.0 337.0,249.0 339.5,257.0 336.0,265.0 331.0,258.0" fill="#4f8a60" stroke="#1f3a2a" stroke-width="0.6"/>
<polygon points="331.0,252.0 337.5,247.0 338.0,262.0 334.0,262.0" fill="#4f8a60" stroke="#1f3a2a" stroke-width="0.6"/>
<polygon points="643.0,581.0 646.0,583.0 647.0,589.0 644.5,588.0" fill="#4f8a60" stroke="#1f3a2a" stroke-width="0.6"/>
<polygon points="515.0,598.5 530.0,596.5 525.0,603.0 519.0,601.5" fill="#c9c21a" stroke="#8a8410" stroke-width="0.3"/>
<polygon points="585.0,634.0 606.0,637.5 611.0,645.0 606.0,650.0 607.5,662.5 604.0,664.0 597.5,652.5 590.0,642.5" fill="#c9c21a" stroke="#8a8410" stroke-width="0.3"/>
<polygon points="839.0,670.5 860.0,668.5 851.0,682.0 843.0,675.5" fill="#c9c21a" stroke="#8a8410" stroke-width="0.3"/>
<polygon points="971.0,606.5 984.0,604.0 979.0,611.5" fill="#c9c21a" stroke="#8a8410" stroke-width="0.3"/>
<polyline points="26.0,225.0 45.0,226.0 52.5,234.0 54.0,241.0 44.0,254.0 47.5,262.5 62.5,271.0 77.5,280.0 81.0,292.5 94.0,305.0 97.5,309.0 127.5,315.0 145.0,314.0" fill="none" stroke="#b4563c" stroke-width="0.7" stroke-linejoin="round"/>
<polyline points="94.0,305.0 96.7,316.0 93.6,325.0 83.3,338.0 79.3,341.0 74.6,358.5" fill="none" stroke="#b4563c" stroke-width="0.7" stroke-linejoin="round"/>
<polyline points="86.5,340.0 97.5,357.8" fill="none" stroke="#b4563c" stroke-width="0.7" stroke-linejoin="round"/>
<polyline points="127.6,300.0 129.0,314.0 124.4,328.5 127.6,346.0 135.5,361.7" fill="none" stroke="#b4563c" stroke-width="0.7" stroke-linejoin="round"/>
<polyline points="149.7,333.0 189.0,349.0 196.4,353.8 194.0,361.0 220.0,372.8" fill="none" stroke="#b4563c" stroke-width="0.7" stroke-linejoin="round"/>
<polyline points="217.8,357.8 206.7,380.7" fill="none" stroke="#b4563c" stroke-width="0.7" stroke-linejoin="round"/>
<polyline points="246.0,266.0 241.0,290.0 245.0,315.0 232.5,340.0 219.0,372.0 208.5,399.0" fill="none" stroke="#b4563c" stroke-width="0.7" stroke-linejoin="round"/>
<polyline points="336.0,335.0 312.5,327.5 285.0,327.5 272.5,340.0 260.0,370.0 253.0,392.0 252.8,408.0 233.9,425.6 216.0,444.0" fill="none" stroke="#b4563c" stroke-width="0.7" stroke-linejoin="round"/>
<polyline points="252.8,408.0 274.4,391.5 285.0,385.0 300.0,378.0" fill="none" stroke="#b4563c" stroke-width="0.7" stroke-linejoin="round"/>
<polyline points="232.6,375.0 251.6,387.7" fill="none" stroke="#b4563c" stroke-width="0.7" stroke-linejoin="round"/>
<polyline points="324.0,210.0 329.0,215.0 326.0,225.0 335.0,240.0 339.0,252.5 346.0,268.0 348.0,285.0 340.0,300.0 338.0,320.0 330.0,337.0" fill="none" stroke="#b4563c" stroke-width="0.7" stroke-linejoin="round"/>
<polyline points="147.0,384.5 180.7,389.6 195.3,395.9 208.5,401.6 221.2,406.6 233.9,408.5 237.0,414.2 250.3,419.3 264.2,424.4 274.4,428.0 285.0,416.8 297.5,415.0 336.0,395.0" fill="none" stroke="#b4563c" stroke-width="0.7" stroke-linejoin="round"/>
<polyline points="144.0,391.5 146.5,406.6 150.3,423.0 154.0,429.4 165.5,434.5" fill="none" stroke="#b4563c" stroke-width="0.7" stroke-linejoin="round"/>
<polyline points="180.7,389.6 175.6,400.3" fill="none" stroke="#b4563c" stroke-width="0.7" stroke-linejoin="round"/>
<polyline points="195.3,395.9 189.6,408.0" fill="none" stroke="#b4563c" stroke-width="0.7" stroke-linejoin="round"/>
<polyline points="208.5,401.6 202.2,413.0" fill="none" stroke="#b4563c" stroke-width="0.7" stroke-linejoin="round"/>
<polyline points="221.2,406.6 216.0,418.0" fill="none" stroke="#b4563c" stroke-width="0.7" stroke-linejoin="round"/>
<polyline points="166.8,400.3 180.7,406.6 201.0,413.0 216.0,419.3" fill="none" stroke="#b4563c" stroke-width="0.7" stroke-linejoin="round"/>
<polyline points="149.0,408.5 161.7,413.0 166.8,405.4" fill="none" stroke="#b4563c" stroke-width="0.7" stroke-linejoin="round"/>
<polyline points="157.3,397.8 152.2,408.0" fill="none" stroke="#b4563c" stroke-width="0.7" stroke-linejoin="round"/>
<polyline points="180.7,406.6 174.4,419.3 166.8,435.8" fill="none" stroke="#b4563c" stroke-width="0.7" stroke-linejoin="round"/>
<polyline points="252.5,486.0 242.5,510.0" fill="none" stroke="#b4563c" stroke-width="0.7" stroke-linejoin="round"/>
<polyline points="272.5,490.0 262.5,517.5" fill="none" stroke="#b4563c" stroke-width="0.7" stroke-linejoin="round"/>
<polyline points="315.0,495.0 302.5,522.5" fill="none" stroke="#b4563c" stroke-width="0.7" stroke-linejoin="round"/>
<polyline points="336.0,515.0 327.5,527.5" fill="none" stroke="#b4563c" stroke-width="0.7" stroke-linejoin="round"/>
<polyline points="320.0,462.5 312.5,495.0" fill="none" stroke="#b4563c" stroke-width="0.7" stroke-linejoin="round"/>
<polyline points="250.3,419.3 242.7,438.3" fill="none" stroke="#b4563c" stroke-width="0.7" stroke-linejoin="round"/>
<polyline points="170.0,432.5 175.0,444.0 183.0,440.0 190.0,450.0" fill="none" stroke="#b4563c" stroke-width="0.7" stroke-linejoin="round"/>
<polyline points="172.0,440.0 180.0,450.0 186.0,446.0" fill="none" stroke="#b4563c" stroke-width="0.7" stroke-linejoin="round"/>
<polyline points="165.0,436.0 171.0,446.0 178.0,443.0" fill="none" stroke="#b4563c" stroke-width="0.7" stroke-linejoin="round"/>
<polyline points="330.0,484.0 355.0,487.5 402.5,505.0 455.0,522.5 485.0,532.5 520.0,545.0 545.0,554.0 580.0,565.0 630.0,585.0" fill="none" stroke="#b4563c" stroke-width="0.7" stroke-linejoin="round"/>
<polyline points="347.5,465.0 390.0,477.5 412.5,484.0 470.0,502.5 537.5,525.0 595.0,545.0" fill="none" stroke="#b4563c" stroke-width="0.7" stroke-linejoin="round"/>
<polyline points="384.0,456.0 412.5,465.0 485.0,491.0 542.5,510.0 600.0,530.0" fill="none" stroke="#b4563c" stroke-width="0.7" stroke-linejoin="round"/>
<polyline points="330.0,499.0 385.0,517.5 445.0,545.0 500.0,562.5 550.0,577.5 580.0,590.0" fill="none" stroke="#b4563c" stroke-width="0.7" stroke-linejoin="round"/>
<polyline points="510.0,481.0 567.5,500.0 600.0,511.0" fill="none" stroke="#b4563c" stroke-width="0.7" stroke-linejoin="round"/>
<polyline points="530.0,450.0 582.5,467.5" fill="none" stroke="#b4563c" stroke-width="0.7" stroke-linejoin="round"/>
<polyline points="389.0,440.0 382.5,456.0 367.5,470.0 349.0,481.0 330.0,499.0" fill="none" stroke="#b4563c" stroke-width="0.7" stroke-linejoin="round"/>
<polyline points="435.0,420.0 422.5,447.5 410.0,465.0 402.5,485.0 385.0,517.5 375.0,540.0" fill="none" stroke="#b4563c" stroke-width="0.7" stroke-linejoin="round"/>
<polyline points="432.5,495.0 425.0,515.0 415.0,560.0" fill="none" stroke="#b4563c" stroke-width="0.7" stroke-linejoin="round"/>
<polyline points="455.0,522.5 445.0,545.0 437.5,572.5" fill="none" stroke="#b4563c" stroke-width="0.7" stroke-linejoin="round"/>
<polyline points="482.5,532.5 472.5,557.5 467.5,585.0" fill="none" stroke="#b4563c" stroke-width="0.7" stroke-linejoin="round"/>
<polyline points="520.0,522.5 510.0,545.0 500.0,562.5 502.5,595.0" fill="none" stroke="#b4563c" stroke-width="0.7" stroke-linejoin="round"/>
<polyline points="542.5,475.0 537.5,490.0 520.0,522.5" fill="none" stroke="#b4563c" stroke-width="0.7" stroke-linejoin="round"/>
<polyline points="557.5,560.0 550.0,577.5 545.0,600.0" fill="none" stroke="#b4563c" stroke-width="0.7" stroke-linejoin="round"/>
<polyline points="600.0,552.5 590.0,570.0 580.0,590.0 560.0,612.5" fill="none" stroke="#b4563c" stroke-width="0.7" stroke-linejoin="round"/>
<polyline points="630.0,585.0 637.5,602.5 630.0,627.5" fill="none" stroke="#b4563c" stroke-width="0.7" stroke-linejoin="round"/>
<polyline points="582.5,467.5 560.0,517.5 545.0,554.0" fill="none" stroke="#b4563c" stroke-width="0.7" stroke-linejoin="round"/>
<polyline points="330.0,332.5 345.0,327.5 367.5,316.0 375.0,304.0 395.0,296.0 410.0,290.0 425.0,282.5 435.0,274.0 450.0,274.0 460.0,275.0" fill="none" stroke="#b4563c" stroke-width="0.7" stroke-linejoin="round"/>
<polyline points="460.0,305.5 452.5,316.0 455.0,335.0 459.0,345.0 447.5,357.5 440.0,375.0 440.0,385.0 434.0,394.0" fill="none" stroke="#b4563c" stroke-width="0.7" stroke-linejoin="round"/>
<polyline points="380.0,397.5 402.5,405.0 440.0,416.0 467.5,427.5 525.0,447.0" fill="none" stroke="#b4563c" stroke-width="0.7" stroke-linejoin="round"/>
<polyline points="424.0,390.0 482.5,411.0" fill="none" stroke="#b4563c" stroke-width="0.7" stroke-linejoin="round"/>
<polyline points="407.5,375.0 417.5,389.0 426.0,392.5 420.0,409.0 435.0,420.0 422.5,447.0" fill="none" stroke="#b4563c" stroke-width="0.7" stroke-linejoin="round"/>
<polyline points="445.0,400.0 440.0,416.0 430.0,430.0 426.0,447.0" fill="none" stroke="#b4563c" stroke-width="0.7" stroke-linejoin="round"/>
<polyline points="467.5,427.5 460.0,440.0 470.0,447.0" fill="none" stroke="#b4563c" stroke-width="0.7" stroke-linejoin="round"/>
<polyline points="330.0,392.0 345.0,397.5 362.5,404.0 380.0,400.0" fill="none" stroke="#b4563c" stroke-width="0.7" stroke-linejoin="round"/>
<polyline points="490.0,386.0 495.0,389.0 496.0,397.5 505.0,410.0 507.5,425.0 502.5,437.5" fill="none" stroke="#b4563c" stroke-width="0.7" stroke-linejoin="round"/>
<polyline points="707.5,375.0 715.0,385.0 710.0,395.0 705.0,407.5 694.0,421.0 697.5,432.5 740.0,429.0 740.0,415.0 745.0,411.0 746.0,394.0" fill="none" stroke="#b4563c" stroke-width="0.7" stroke-linejoin="round"/>
<polyline points="662.5,436.0 697.5,432.5" fill="none" stroke="#b4563c" stroke-width="0.7" stroke-linejoin="round"/>
<polyline points="682.5,436.0 690.0,462.5 697.5,492.5 705.0,520.0 710.0,535.0" fill="none" stroke="#b4563c" stroke-width="0.7" stroke-linejoin="round"/>
<polyline points="632.5,470.0 690.0,462.5 740.0,457.5 750.0,456.0" fill="none" stroke="#b4563c" stroke-width="0.7" stroke-linejoin="round"/>
<polyline points="729.0,430.0 740.0,457.5 747.5,487.5 757.5,515.0" fill="none" stroke="#b4563c" stroke-width="0.7" stroke-linejoin="round"/>
<polyline points="614.0,501.0 697.5,492.5 725.0,489.0" fill="none" stroke="#b4563c" stroke-width="0.7" stroke-linejoin="round"/>
<polyline points="610.0,531.0 645.0,527.5 677.5,524.0 705.0,520.0" fill="none" stroke="#b4563c" stroke-width="0.7" stroke-linejoin="round"/>
<polyline points="632.5,470.0 640.0,500.0 645.0,527.5 642.5,542.5" fill="none" stroke="#b4563c" stroke-width="0.7" stroke-linejoin="round"/>
<polyline points="560.0,497.5 600.0,511.0" fill="none" stroke="#b4563c" stroke-width="0.7" stroke-linejoin="round"/>
<polyline points="560.0,520.0 585.0,530.0 597.5,532.5" fill="none" stroke="#b4563c" stroke-width="0.7" stroke-linejoin="round"/>
<polyline points="757.5,515.0 829.0,507.0 837.5,510.0 876.0,497.5" fill="none" stroke="#b4563c" stroke-width="0.7" stroke-linejoin="round"/>
<polyline points="720.0,532.5 735.0,520.0 757.5,515.0" fill="none" stroke="#b4563c" stroke-width="0.7" stroke-linejoin="round"/>
<polyline points="677.5,524.0 671.0,535.0 672.5,547.5 705.0,545.0" fill="none" stroke="#b4563c" stroke-width="0.7" stroke-linejoin="round"/>
<polyline points="641.0,384.0 650.0,391.0 662.0,395.0 667.0,402.0 661.0,412.0" fill="none" stroke="#b4563c" stroke-width="0.7" stroke-linejoin="round"/>
<polyline points="643.0,399.0 651.0,394.0" fill="none" stroke="#b4563c" stroke-width="0.7" stroke-linejoin="round"/>
<polyline points="661.0,435.0 682.5,436.0" fill="none" stroke="#b4563c" stroke-width="0.7" stroke-linejoin="round"/>
<polyline points="696.0,434.0 700.0,447.0 706.0,470.0" fill="none" stroke="#b4563c" stroke-width="0.7" stroke-linejoin="round"/>
<polyline points="632.5,560.0 632.5,585.0 635.0,610.0 627.5,622.5" fill="none" stroke="#b4563c" stroke-width="0.7" stroke-linejoin="round"/>
<polyline points="650.0,585.0 652.5,607.5 654.0,620.0 645.0,632.5 652.5,665.0 612.5,677.5" fill="none" stroke="#b4563c" stroke-width="0.7" stroke-linejoin="round"/>
<polyline points="652.5,607.5 690.0,602.5" fill="none" stroke="#b4563c" stroke-width="0.7" stroke-linejoin="round"/>
<polyline points="654.0,620.0 677.5,616.0 717.5,612.5 727.5,611.0" fill="none" stroke="#b4563c" stroke-width="0.7" stroke-linejoin="round"/>
<polyline points="677.5,616.0 680.0,632.5 670.0,645.0 674.0,660.0 662.5,662.5 670.0,697.5" fill="none" stroke="#b4563c" stroke-width="0.7" stroke-linejoin="round"/>
<polyline points="610.0,652.5 645.0,632.5" fill="none" stroke="#b4563c" stroke-width="0.7" stroke-linejoin="round"/>
<polyline points="639.0,675.0 662.5,662.5" fill="none" stroke="#b4563c" stroke-width="0.7" stroke-linejoin="round"/>
<polyline points="639.0,675.0 642.5,695.0" fill="none" stroke="#b4563c" stroke-width="0.7" stroke-linejoin="round"/>
<polyline points="670.0,685.0 677.5,680.0 702.5,682.5 707.5,696.0" fill="none" stroke="#b4563c" stroke-width="0.7" stroke-linejoin="round"/>
<polyline points="583.0,628.0 592.0,620.0 600.0,624.0 607.0,617.0" fill="none" stroke="#b4563c" stroke-width="0.7" stroke-linejoin="round"/>
<polyline points="586.0,632.0 598.0,627.0" fill="none" stroke="#b4563c" stroke-width="0.7" stroke-linejoin="round"/>
<polyline points="722.5,575.0 732.5,625.0 740.0,660.0 745.0,670.0 750.0,692.5" fill="none" stroke="#b4563c" stroke-width="0.7" stroke-linejoin="round"/>
<polyline points="700.0,627.5 732.5,625.0 762.5,625.0" fill="none" stroke="#b4563c" stroke-width="0.7" stroke-linejoin="round"/>
<polyline points="702.5,640.0 735.0,637.5 772.5,625.0" fill="none" stroke="#b4563c" stroke-width="0.7" stroke-linejoin="round"/>
<polyline points="735.0,677.5 760.0,667.5 767.5,690.0" fill="none" stroke="#b4563c" stroke-width="0.7" stroke-linejoin="round"/>
<polyline points="738.0,668.0 755.0,668.0" fill="none" stroke="#b4563c" stroke-width="0.7" stroke-linejoin="round"/>
<polyline points="740.0,677.0 758.0,675.0" fill="none" stroke="#b4563c" stroke-width="0.7" stroke-linejoin="round"/>
<polyline points="742.0,686.0 764.0,683.0" fill="none" stroke="#b4563c" stroke-width="0.7" stroke-linejoin="round"/>
<polyline points="744.0,668.0 747.0,694.0" fill="none" stroke="#b4563c" stroke-width="0.7" stroke-linejoin="round"/>
<polyline points="750.0,668.0 754.0,693.0" fill="none" stroke="#b4563c" stroke-width="0.7" stroke-linejoin="round"/>
<polyline points="756.0,668.0 760.0,692.0" fill="none" stroke="#b4563c" stroke-width="0.7" stroke-linejoin="round"/>
<polyline points="780.0,597.5 798.0,601.5 819.5,599.6 857.5,595.8" fill="none" stroke="#b4563c" stroke-width="0.7" stroke-linejoin="round"/>
<polyline points="810.0,567.5 813.8,580.0 819.5,599.0 825.8,624.3 830.9,640.8 837.2,664.8" fill="none" stroke="#b4563c" stroke-width="0.7" stroke-linejoin="round"/>
<polyline points="829.0,570.0 831.5,580.0 837.2,601.5 842.3,628.0 847.3,648.4 851.0,661.0" fill="none" stroke="#b4563c" stroke-width="0.7" stroke-linejoin="round"/>
<polyline points="846.0,535.0 851.0,560.0 855.0,580.0 860.0,601.5 865.0,621.8 870.0,640.8 875.0,658.5" fill="none" stroke="#b4563c" stroke-width="0.7" stroke-linejoin="round"/>
<polyline points="801.0,602.0 803.7,615.4 808.0,618.0 813.0,640.8 819.5,666.0" fill="none" stroke="#b4563c" stroke-width="0.7" stroke-linejoin="round"/>
<polyline points="777.7,640.8 782.8,656.0 787.8,678.7" fill="none" stroke="#b4563c" stroke-width="0.7" stroke-linejoin="round"/>
<polyline points="853.7,609.0 860.0,630.6 865.0,654.7" fill="none" stroke="#b4563c" stroke-width="0.7" stroke-linejoin="round"/>
<polyline points="848.6,633.0 855.0,656.0" fill="none" stroke="#b4563c" stroke-width="0.7" stroke-linejoin="round"/>
<polyline points="802.4,616.0 823.3,613.5 848.6,610.4 861.3,607.2" fill="none" stroke="#b4563c" stroke-width="0.7" stroke-linejoin="round"/>
<polyline points="808.0,627.5 825.8,625.0 841.0,623.0 857.5,620.0" fill="none" stroke="#b4563c" stroke-width="0.7" stroke-linejoin="round"/>
<polyline points="831.0,635.7 848.6,632.5 860.0,630.6" fill="none" stroke="#b4563c" stroke-width="0.7" stroke-linejoin="round"/>
<polyline points="782.0,650.0 798.0,645.8 815.7,642.0 828.4,640.8" fill="none" stroke="#b4563c" stroke-width="0.7" stroke-linejoin="round"/>
<polyline points="817.0,657.0 833.4,654.7 848.6,651.0 865.0,649.0" fill="none" stroke="#b4563c" stroke-width="0.7" stroke-linejoin="round"/>
<polyline points="879.0,621.8 899.0,611.6 903.0,607.2 920.0,609.0" fill="none" stroke="#b4563c" stroke-width="0.7" stroke-linejoin="round"/>
<polyline points="838.0,648.0 843.0,662.0" fill="none" stroke="#b4563c" stroke-width="0.7" stroke-linejoin="round"/>
<polyline points="842.0,640.0 853.0,637.0" fill="none" stroke="#b4563c" stroke-width="0.7" stroke-linejoin="round"/>
<polyline points="852.5,410.0 860.0,414.0 874.0,406.0 907.5,392.5 919.0,407.5 915.0,412.5 887.5,425.0 840.0,447.0" fill="none" stroke="#b4563c" stroke-width="0.7" stroke-linejoin="round"/>
<polyline points="874.0,406.0 881.0,425.0" fill="none" stroke="#b4563c" stroke-width="0.7" stroke-linejoin="round"/>
<polyline points="822.5,452.5 840.0,447.0" fill="none" stroke="#b4563c" stroke-width="0.7" stroke-linejoin="round"/>
<polyline points="850.0,489.0 890.0,473.4 906.5,465.8 911.5,464.0" fill="none" stroke="#b4563c" stroke-width="0.7" stroke-linejoin="round"/>
<polyline points="937.5,452.0 944.4,447.5 963.4,440.5 978.6,434.2 991.3,428.5 998.2,422.8 1003.0,419.0 1008.0,417.0" fill="none" stroke="#b4563c" stroke-width="0.7" stroke-linejoin="round"/>
<polyline points="1001.0,423.0 1009.0,420.5" fill="none" stroke="#b4563c" stroke-width="0.7" stroke-linejoin="round"/>
<polyline points="846.0,545.0 890.0,522.7 898.4,517.9 910.9,513.0 927.6,506.7 959.0,494.0" fill="none" stroke="#b4563c" stroke-width="0.7" stroke-linejoin="round"/>
<polyline points="962.0,490.0 978.6,482.3 997.6,476.0 1014.0,468.4" fill="none" stroke="#b4563c" stroke-width="0.7" stroke-linejoin="round"/>
<polyline points="852.0,565.0 890.0,548.5 904.6,543.0 924.8,534.6 945.7,524.8 956.9,520.0 980.0,510.0 998.9,500.0 1016.6,491.8 1039.4,483.5 1047.0,479.7" fill="none" stroke="#b4563c" stroke-width="0.7" stroke-linejoin="round"/>
<polyline points="860.0,584.0 890.0,571.5 908.0,563.8 926.2,556.2 938.7,550.6 950.0,547.0 956.9,543.6 973.6,537.4 990.3,530.4 1004.2,523.4 1015.3,517.0 1029.3,510.9 1046.0,504.0" fill="none" stroke="#b4563c" stroke-width="0.7" stroke-linejoin="round"/>
<polyline points="870.0,600.0 898.4,586.0 915.0,577.7 926.2,572.9" fill="none" stroke="#b4563c" stroke-width="0.7" stroke-linejoin="round"/>
<polyline points="970.8,572.0 979.0,563.0 986.0,559.0 1000.0,556.0 1009.8,551.3 1015.3,543.0 1019.5,538.0 1027.9,538.0 1037.6,534.6 1046.7,531.0" fill="none" stroke="#b4563c" stroke-width="0.7" stroke-linejoin="round"/>
<polyline points="876.0,640.0 910.0,625.0 940.0,612.0" fill="none" stroke="#b4563c" stroke-width="0.7" stroke-linejoin="round"/>
<polyline points="865.0,507.5 880.0,545.0 897.5,585.0 915.0,620.0 925.0,640.0" fill="none" stroke="#b4563c" stroke-width="0.7" stroke-linejoin="round"/>
<polyline points="897.0,520.0 895.6,526.2 899.7,534.6 904.0,539.4 904.6,543.0" fill="none" stroke="#b4563c" stroke-width="0.7" stroke-linejoin="round"/>
<polyline points="926.2,572.9 933.2,587.5 940.0,598.6 950.0,620.0 955.0,631.0" fill="none" stroke="#b4563c" stroke-width="0.7" stroke-linejoin="round"/>
<polyline points="940.0,598.6 954.0,592.4 966.0,586.0" fill="none" stroke="#b4563c" stroke-width="0.7" stroke-linejoin="round"/>
<polyline points="950.0,547.0 952.0,551.3 959.6,568.0 966.0,579.0 966.6,586.0 970.8,593.0 979.0,600.0" fill="none" stroke="#b4563c" stroke-width="0.7" stroke-linejoin="round"/>
<polyline points="913.7,530.4 922.0,529.7 931.8,527.0 937.4,526.2 941.5,523.4" fill="none" stroke="#b4563c" stroke-width="0.7" stroke-linejoin="round"/>
<polyline points="976.4,490.0 987.5,492.8 989.6,498.4 988.9,502.5 995.8,501.0 1015.3,492.8 1023.7,490.0" fill="none" stroke="#b4563c" stroke-width="0.7" stroke-linejoin="round"/>
<polyline points="924.8,490.0 941.5,519.2 952.7,545.7" fill="none" stroke="#b4563c" stroke-width="0.7" stroke-linejoin="round"/>
<polyline points="937.5,452.0 943.2,463.3 947.0,471.0 955.8,469.0 958.4,467.0 972.3,462.0 991.3,454.4 1014.0,443.0 1029.2,436.7" fill="none" stroke="#b4563c" stroke-width="0.7" stroke-linejoin="round"/>
<polyline points="957.0,469.0 963.4,482.3 962.0,490.0 959.0,493.7 965.2,504.0 968.0,517.9 975.0,536.0 986.0,559.0 995.8,579.0 1002.8,587.5" fill="none" stroke="#b4563c" stroke-width="0.7" stroke-linejoin="round"/>
<polyline points="998.2,422.8 998.9,431.6 996.3,441.8 998.9,448.0 993.8,457.0 1000.0,472.0 1006.5,493.7" fill="none" stroke="#b4563c" stroke-width="0.7" stroke-linejoin="round"/>
<polyline points="995.8,501.0 1000.0,512.3 1004.2,521.3 1008.4,541.5 1014.0,555.5 1020.9,568.0 1025.0,573.6" fill="none" stroke="#b4563c" stroke-width="0.7" stroke-linejoin="round"/>
<polyline points="1016.7,490.0 1023.7,504.0 1027.9,509.5" fill="none" stroke="#b4563c" stroke-width="0.7" stroke-linejoin="round"/>
<polyline points="1016.7,517.0 1023.7,530.4 1029.3,538.0 1037.6,551.3 1044.6,562.4" fill="none" stroke="#b4563c" stroke-width="0.7" stroke-linejoin="round"/>
<polyline points="1033.7,463.3 1040.6,476.0 1042.0,481.0 1047.0,491.0" fill="none" stroke="#b4563c" stroke-width="0.7" stroke-linejoin="round"/>
<polyline points="1028.0,430.4 1034.3,441.8 1039.4,453.0 1035.6,455.7" fill="none" stroke="#b4563c" stroke-width="0.7" stroke-linejoin="round"/>
<polyline points="977.0,487.0 978.6,491.0 986.0,491.0 990.0,499.0" fill="none" stroke="#b4563c" stroke-width="0.7" stroke-linejoin="round"/>
<polyline points="200.0,397.5 215.0,402.5 232.5,395.0 250.0,390.0 275.0,380.0" fill="none" stroke="#b4563c" stroke-width="0.7" stroke-linejoin="round"/>
<polyline points="236.4,430.7 242.7,438.3 255.4,453.5 268.0,457.3 290.0,458.5" fill="none" stroke="#b4563c" stroke-width="0.7" stroke-linejoin="round"/>
<polyline points="215.5,452.0 226.3,461.0 236.4,473.7" fill="none" stroke="#b4563c" stroke-width="0.7" stroke-linejoin="round"/>
<polyline points="215.0,475.0 232.5,467.5 242.5,480.0 257.5,487.5 275.0,490.0 317.5,496.0" fill="none" stroke="#b4563c" stroke-width="0.7" stroke-linejoin="round"/>
<polyline points="305.0,460.0 322.5,466.0 317.5,480.0 336.0,487.5 339.0,480.0 350.0,482.5 347.5,465.0" fill="none" stroke="#b4563c" stroke-width="0.7" stroke-linejoin="round"/>
<polyline points="337.5,447.5 342.5,457.5 360.0,466.0 375.0,457.5 382.5,455.0" fill="none" stroke="#b4563c" stroke-width="0.7" stroke-linejoin="round"/>
<polyline points="362.5,436.0 365.0,447.5 380.0,457.5" fill="none" stroke="#b4563c" stroke-width="0.7" stroke-linejoin="round"/>
<polyline points="382.5,455.0 391.0,438.0 397.5,422.5 402.5,405.0" fill="none" stroke="#b4563c" stroke-width="0.7" stroke-linejoin="round"/>
<polyline points="282.5,492.5 320.0,497.5 330.0,499.0" fill="none" stroke="#b4563c" stroke-width="0.7" stroke-linejoin="round"/>
<polyline points="322.5,483.8 302.5,520.0" fill="none" stroke="#b4563c" stroke-width="0.7" stroke-linejoin="round"/>
<polyline points="350.0,485.0 327.5,525.0" fill="none" stroke="#b4563c" stroke-width="0.7" stroke-linejoin="round"/>
<polyline points="103.8,198.0 412.5,330.5" fill="none" stroke="#46524a" stroke-width="1" stroke-linejoin="round"/>
<polyline points="330.0,429.0 336.7,415.0 345.4,396.0 351.0,397.6 362.8,373.9 383.4,380.5 395.2,351.0 402.3,354.0 412.0,331.5 427.7,299.5 430.8,293.2 435.0,293.0 631.2,364.5 623.8,382.5 640.0,381.2 793.8,363.8 812.5,405.0 956.0,350.0 981.0,341.0 981.0,336.0 1049.0,292.0" fill="none" stroke="#46524a" stroke-width="1" stroke-linejoin="round"/>
<polyline points="981.0,336.0 1005.0,382.5 1015.0,400.0 1029.0,425.0 1049.0,465.5" fill="none" stroke="#46524a" stroke-width="1" stroke-linejoin="round"/>
<polyline points="1021.0,70.0 1049.0,93.0" fill="none" stroke="#46524a" stroke-width="1" stroke-linejoin="round"/>
<polyline points="26.0,322.0 39.0,333.0 58.0,349.0 73.8,361.0 77.8,363.3 79.3,360.0 90.4,361.0 92.8,357.8 103.0,361.0 101.5,368.0 97.5,374.4 108.6,377.5 124.4,383.0 133.0,383.0" fill="none" stroke="#46524a" stroke-width="1" stroke-linejoin="round"/>
<polyline points="235.0,259.0 174.0,377.0 170.3,383.0 164.0,381.5 157.7,382.3 140.0,374.4" fill="none" stroke="#46524a" stroke-width="1" stroke-linejoin="round"/>
<polyline points="330.0,425.0 362.5,436.0 366.0,429.0 390.0,437.5 386.0,447.0 382.5,456.0 484.0,492.0 502.5,498.8" fill="none" stroke="#46524a" stroke-width="1" stroke-linejoin="round"/>
<polyline points="330.0,429.0 320.0,447.5 306.0,445.0 292.5,470.0 271.0,516.0" fill="none" stroke="#46524a" stroke-width="1" stroke-linejoin="round"/>
<polyline points="426.0,307.5 502.5,336.0" fill="none" stroke="#46524a" stroke-width="1" stroke-linejoin="round"/>
<polyline points="537.5,420.0 527.5,447.0 510.0,481.0 501.0,498.0" fill="none" stroke="#46524a" stroke-width="1" stroke-linejoin="round"/>
<polyline points="484.0,492.0 466.0,527.5 455.0,550.0 450.0,577.5" fill="none" stroke="#46524a" stroke-width="1" stroke-linejoin="round"/>
<polyline points="530.0,450.0 582.5,467.5 560.0,517.5 545.0,554.0 537.5,575.0 535.0,597.5" fill="none" stroke="#46524a" stroke-width="1" stroke-linejoin="round"/>
<polyline points="812.5,405.0 820.0,445.0 837.5,510.0 852.5,567.0 864.0,610.0 874.0,655.0" fill="none" stroke="#46524a" stroke-width="1" stroke-linejoin="round"/>
<polyline points="760.0,412.0 811.0,404.0" fill="none" stroke="#46524a" stroke-width="1" stroke-linejoin="round"/>
<polyline points="759.5,412.0 767.0,439.5" fill="none" stroke="#46524a" stroke-width="1" stroke-linejoin="round"/>
<polyline points="712.5,535.0 761.0,530.0" fill="none" stroke="#46524a" stroke-width="1" stroke-linejoin="round"/>
<polyline points="748.7,486.0 757.5,515.0 761.0,530.0 770.0,567.0 780.0,597.5 797.5,677.5" fill="none" stroke="#46524a" stroke-width="1" stroke-linejoin="round"/>
<polyline points="712.5,535.0 716.0,565.0" fill="none" stroke="#46524a" stroke-width="1" stroke-linejoin="round"/>
<polyline points="617.5,545.0 656.0,541.0 661.0,557.5 677.5,555.0 680.0,567.0 692.5,610.0 712.5,692.5" fill="none" stroke="#46524a" stroke-width="1" stroke-linejoin="round"/>
<polyline points="925.0,362.5 967.5,440.0 995.0,500.0" fill="none" stroke="#46524a" stroke-width="1" stroke-linejoin="round"/>
<polyline points="881.0,405.0 900.0,447.0 924.8,490.0 941.5,519.2 952.7,545.7 968.0,573.6 973.6,577.7 984.7,600.0" fill="none" stroke="#46524a" stroke-width="1" stroke-linejoin="round"/>
<polyline points="922.5,485.0 865.0,507.5 860.0,511.0 876.0,542.5 904.0,597.0 915.0,618.0" fill="none" stroke="#46524a" stroke-width="1" stroke-linejoin="round"/>
<polyline points="990.3,529.7 1005.6,552.7 1015.3,570.8 1020.2,580.5" fill="none" stroke="#46524a" stroke-width="1" stroke-linejoin="round"/>
<polyline points="944.0,400.0 967.5,440.0" fill="none" stroke="#46524a" stroke-width="1" stroke-linejoin="round"/>
<polyline points="28.0,70.0 27.0,88.0 32.0,93.0 32.0,102.0 28.0,118.0 33.0,137.0 36.0,153.0 43.0,162.0 48.0,176.0 55.0,195.0 63.8,210.0 73.8,222.5 85.0,230.0 97.5,231.0 105.0,240.0 107.5,247.5 116.0,255.0 130.0,259.5 142.5,263.8 150.0,271.0 155.0,280.0 156.0,290.0 151.0,296.0 147.5,300.0 146.6,316.0 147.4,347.5 146.6,366.5 149.0,374.4 148.0,384.0" fill="none" stroke="#4a3418" stroke-width="2.6" stroke-linejoin="round"/>
<polyline points="28.0,70.0 27.0,88.0 32.0,93.0 32.0,102.0 28.0,118.0 33.0,137.0 36.0,153.0 43.0,162.0 48.0,176.0 55.0,195.0 63.8,210.0 73.8,222.5 85.0,230.0 97.5,231.0 105.0,240.0 107.5,247.5 116.0,255.0 130.0,259.5 142.5,263.8 150.0,271.0 155.0,280.0 156.0,290.0 151.0,296.0 147.5,300.0 146.6,316.0 147.4,347.5 146.6,366.5 149.0,374.4 148.0,384.0" fill="none" stroke="#c9a35a" stroke-width="1.2" stroke-linejoin="round"/>
<polyline points="123.6,383.0 127.6,380.0 137.0,380.0 146.6,383.9 157.7,395.0 172.0,406.0 183.0,417.0 190.0,427.5 200.0,437.5 210.0,446.0 216.0,454.0 216.0,482.5 225.0,492.5 227.5,500.0 237.5,507.5 252.5,512.5 272.5,518.0 295.0,520.0 315.0,525.5 336.0,530.0 345.0,534.0 362.5,541.0 380.0,550.0 400.0,557.5 422.5,566.0 440.0,576.0 455.0,582.5 470.0,587.5 485.0,594.0 502.5,597.0 515.0,598.0 525.0,596.0 537.5,599.0 547.5,607.5 560.0,617.5 572.5,630.0 585.0,637.5 600.0,641.0 607.5,647.5 609.0,660.0 612.5,677.5 616.0,689.0 627.5,696.0 655.0,696.0 675.0,702.5 695.0,699.0 715.0,696.0 740.0,695.5 765.0,692.0 777.5,686.0 795.0,679.0 817.5,671.0 838.5,666.3 851.0,662.5 865.0,659.7 881.5,653.0 905.0,647.5 930.0,640.0 950.0,632.5 970.0,622.5 980.0,612.5 986.0,600.5 993.0,594.5 1004.2,590.3 1015.3,586.8 1020.9,582.0 1025.0,575.0 1030.7,569.4 1039.0,565.9 1049.0,562.5" fill="none" stroke="#861c1c" stroke-width="2.2" stroke-linejoin="round" stroke-linecap="round"/>
<polyline points="186.0,470.0 187.5,475.0 190.0,473.5" fill="none" stroke="#111" stroke-width="0.9"/>
<polyline points="187.5,475.0 188.0,478.5" fill="none" stroke="#111" stroke-width="0.9"/>
<polyline points="183.0,469.0 184.5,473.0" fill="none" stroke="#111" stroke-width="0.9"/>
<polygon points="192.5,449.0 196.0,444.0 199.0,447.0 203.0,445.5 205.0,452.0 201.0,455.0 204.0,458.0 198.0,459.0 194.5,455.5" fill="#1a2a2a"/>
<polygon points="602.5,635.0 608.0,631.0 613.5,632.0 611.0,637.5 605.0,638.0" fill="#1a2a2a"/>
<rect x="142.0" y="345" width="8.6" height="10" rx="1" fill="#2fb38c" stroke="#e8fff6" stroke-width="0.5"/><rect x="143.3" y="347.4" width="6" height="0.8" fill="#dff"/><rect x="144.10000000000002" y="350.6" width="4.4" height="2.4" fill="none" stroke="#dff" stroke-width="0.5"/>
<rect x="182.5" y="419.5" width="8.6" height="10" rx="1" fill="#2fb38c" stroke="#e8fff6" stroke-width="0.5"/><rect x="183.8" y="421.9" width="6" height="0.8" fill="#dff"/><rect x="184.60000000000002" y="425.1" width="4.4" height="2.4" fill="none" stroke="#dff" stroke-width="0.5"/>
<rect x="125.5" y="70" width="1.4" height="702.5" fill="#2c4640" fill-opacity="0.26"/>
<rect x="273.3" y="70" width="1.4" height="702.5" fill="#2c4640" fill-opacity="0.26"/>
<rect x="421.7" y="70" width="1.4" height="702.5" fill="#2c4640" fill-opacity="0.26"/>
<rect x="569.3" y="70" width="1.4" height="702.5" fill="#2c4640" fill-opacity="0.26"/>
<rect x="717.3" y="70" width="1.4" height="702.5" fill="#2c4640" fill-opacity="0.26"/>
<rect x="865.3" y="70" width="1.4" height="702.5" fill="#2c4640" fill-opacity="0.26"/>
<rect x="1013.6999999999999" y="70" width="1.4" height="702.5" fill="#2c4640" fill-opacity="0.26"/>
<rect x="26.5" y="134.3" width="1022" height="1.4" fill="#2c4640" fill-opacity="0.26"/>
<rect x="26.5" y="257.3" width="1022" height="1.4" fill="#2c4640" fill-opacity="0.26"/>
<rect x="26.5" y="380.3" width="1022" height="1.4" fill="#2c4640" fill-opacity="0.26"/>
<rect x="26.5" y="503.6" width="1022" height="1.4" fill="#2c4640" fill-opacity="0.26"/>
<rect x="26.5" y="626.5999999999999" width="1022" height="1.4" fill="#2c4640" fill-opacity="0.26"/>
<rect x="26.5" y="749.9" width="1022" height="1.4" fill="#2c4640" fill-opacity="0.26"/>
</g>
<rect x="26" y="69.6" width="1022.8" height="703" fill="none" stroke="#000" stroke-width="1.4"/>
<rect x="125.60000000000001" y="67.4" width="1.2" height="2.4" fill="#000"/><rect x="125.60000000000001" y="772.6" width="1.2" height="2.4" fill="#000"/>
<text class="tick" x="126.2" y="66" text-anchor="middle" textLength="22.5" lengthAdjust="spacingAndGlyphs">200 000</text>
<text class="tick" x="126.2" y="780.3" text-anchor="middle" textLength="22.5" lengthAdjust="spacingAndGlyphs">200 000</text>
<rect x="273.4" y="67.4" width="1.2" height="2.4" fill="#000"/><rect x="273.4" y="772.6" width="1.2" height="2.4" fill="#000"/>
<text class="tick" x="274" y="66" text-anchor="middle" textLength="22.5" lengthAdjust="spacingAndGlyphs">210 000</text>
<text class="tick" x="274" y="780.3" text-anchor="middle" textLength="22.5" lengthAdjust="spacingAndGlyphs">210 000</text>
<rect x="421.79999999999995" y="67.4" width="1.2" height="2.4" fill="#000"/><rect x="421.79999999999995" y="772.6" width="1.2" height="2.4" fill="#000"/>
<text class="tick" x="422.4" y="66" text-anchor="middle" textLength="22.5" lengthAdjust="spacingAndGlyphs">220 000</text>
<text class="tick" x="422.4" y="780.3" text-anchor="middle" textLength="22.5" lengthAdjust="spacingAndGlyphs">220 000</text>
<rect x="569.4" y="67.4" width="1.2" height="2.4" fill="#000"/><rect x="569.4" y="772.6" width="1.2" height="2.4" fill="#000"/>
<text class="tick" x="570" y="66" text-anchor="middle" textLength="22.5" lengthAdjust="spacingAndGlyphs">230 000</text>
<text class="tick" x="570" y="780.3" text-anchor="middle" textLength="22.5" lengthAdjust="spacingAndGlyphs">230 000</text>
<rect x="717.4" y="67.4" width="1.2" height="2.4" fill="#000"/><rect x="717.4" y="772.6" width="1.2" height="2.4" fill="#000"/>
<text class="tick" x="718" y="66" text-anchor="middle" textLength="22.5" lengthAdjust="spacingAndGlyphs">240 000</text>
<text class="tick" x="718" y="780.3" text-anchor="middle" textLength="22.5" lengthAdjust="spacingAndGlyphs">240 000</text>
<rect x="865.4" y="67.4" width="1.2" height="2.4" fill="#000"/><rect x="865.4" y="772.6" width="1.2" height="2.4" fill="#000"/>
<text class="tick" x="866" y="66" text-anchor="middle" textLength="22.5" lengthAdjust="spacingAndGlyphs">250 000</text>
<text class="tick" x="866" y="780.3" text-anchor="middle" textLength="22.5" lengthAdjust="spacingAndGlyphs">250 000</text>
<rect x="1013.8" y="67.4" width="1.2" height="2.4" fill="#000"/><rect x="1013.8" y="772.6" width="1.2" height="2.4" fill="#000"/>
<text class="tick" x="1014.4" y="66" text-anchor="middle" textLength="22.5" lengthAdjust="spacingAndGlyphs">260 000</text>
<text class="tick" x="1014.4" y="780.3" text-anchor="middle" textLength="22.5" lengthAdjust="spacingAndGlyphs">260 000</text>
<rect x="23.6" y="134.4" width="2.4" height="1.2" fill="#000"/><rect x="1048.8" y="134.4" width="2.4" height="1.2" fill="#000"/>
<text class="tick" transform="translate(21.8,135) rotate(-90)" text-anchor="middle" textLength="25.5" lengthAdjust="spacingAndGlyphs">5 360 000</text>
<text class="tick" transform="translate(1057.2,135) rotate(-90)" text-anchor="middle" textLength="25.5" lengthAdjust="spacingAndGlyphs">5 360 000</text>
<rect x="23.6" y="257.4" width="2.4" height="1.2" fill="#000"/><rect x="1048.8" y="257.4" width="2.4" height="1.2" fill="#000"/>
<text class="tick" transform="translate(21.8,258) rotate(-90)" text-anchor="middle" textLength="25.5" lengthAdjust="spacingAndGlyphs">5 350 000</text>
<text class="tick" transform="translate(1057.2,258) rotate(-90)" text-anchor="middle" textLength="25.5" lengthAdjust="spacingAndGlyphs">5 350 000</text>
<rect x="23.6" y="380.4" width="2.4" height="1.2" fill="#000"/><rect x="1048.8" y="380.4" width="2.4" height="1.2" fill="#000"/>
<text class="tick" transform="translate(21.8,381) rotate(-90)" text-anchor="middle" textLength="25.5" lengthAdjust="spacingAndGlyphs">5 340 000</text>
<text class="tick" transform="translate(1057.2,381) rotate(-90)" text-anchor="middle" textLength="25.5" lengthAdjust="spacingAndGlyphs">5 340 000</text>
<rect x="23.6" y="503.7" width="2.4" height="1.2" fill="#000"/><rect x="1048.8" y="503.7" width="2.4" height="1.2" fill="#000"/>
<text class="tick" transform="translate(21.8,504.3) rotate(-90)" text-anchor="middle" textLength="25.5" lengthAdjust="spacingAndGlyphs">5 330 000</text>
<text class="tick" transform="translate(1057.2,504.3) rotate(-90)" text-anchor="middle" textLength="25.5" lengthAdjust="spacingAndGlyphs">5 330 000</text>
<rect x="23.6" y="626.6999999999999" width="2.4" height="1.2" fill="#000"/><rect x="1048.8" y="626.6999999999999" width="2.4" height="1.2" fill="#000"/>
<text class="tick" transform="translate(21.8,627.3) rotate(-90)" text-anchor="middle" textLength="25.5" lengthAdjust="spacingAndGlyphs">5 320 000</text>
<text class="tick" transform="translate(1057.2,627.3) rotate(-90)" text-anchor="middle" textLength="25.5" lengthAdjust="spacingAndGlyphs">5 320 000</text>
<rect x="23.6" y="750.0" width="2.4" height="1.2" fill="#000"/><rect x="1048.8" y="750.0" width="2.4" height="1.2" fill="#000"/>
<text class="tick" transform="translate(21.8,750.6) rotate(-90)" text-anchor="middle" textLength="25.5" lengthAdjust="spacingAndGlyphs">5 310 000</text>
<text class="tick" transform="translate(1057.2,750.6) rotate(-90)" text-anchor="middle" textLength="25.5" lengthAdjust="spacingAndGlyphs">5 310 000</text>
<text class="lbl" x="57.7" y="303.6" text-anchor="middle" textLength="47.5" lengthAdjust="spacingAndGlyphs">Cascapédia-</text>
<text class="lbl" x="57.3" y="311.2" text-anchor="middle" textLength="44" lengthAdjust="spacingAndGlyphs">Saint-Jules</text>
<text class="lbl" x="238" y="355" text-anchor="middle" textLength="58.7" lengthAdjust="spacingAndGlyphs">New Richmond</text>
<text class="lbl" x="53.5" y="394" text-anchor="middle" textLength="18" lengthAdjust="spacingAndGlyphs">MRC</text>
<text class="lbl" x="53.8" y="403.6" text-anchor="middle" textLength="33" lengthAdjust="spacingAndGlyphs">Avignon</text>
<text class="lbl" x="496" y="193" text-anchor="middle" textLength="17" lengthAdjust="spacingAndGlyphs">TNO</text>
<text class="lbl" x="496.4" y="201.8" text-anchor="middle" textLength="81" lengthAdjust="spacingAndGlyphs">Rivière-Bonaventure</text>
<text class="lbl" x="1017.5" y="332.5" text-anchor="middle" textLength="18" lengthAdjust="spacingAndGlyphs">MRC</text>
<text class="lbl" x="1017.5" y="341" text-anchor="middle" textLength="8" lengthAdjust="spacingAndGlyphs">Le</text>
<text class="lbl" x="1018" y="350" text-anchor="middle" textLength="54" lengthAdjust="spacingAndGlyphs">Rocher-Percé</text>
<text class="lbl" x="990" y="409" text-anchor="middle" textLength="42.5" lengthAdjust="spacingAndGlyphs">Shigawake</text>
<text class="lbl" x="463.8" y="459.6" text-anchor="middle" textLength="60" lengthAdjust="spacingAndGlyphs">Saint-Alphonse</text>
<text class="lbl" x="392.2" y="510.8" text-anchor="middle" textLength="27" lengthAdjust="spacingAndGlyphs">Caplan</text>
<text class="lbl" x="523" y="541.8" text-anchor="middle" textLength="54" lengthAdjust="spacingAndGlyphs">Saint-Siméon</text>
<text class="lbl" x="601" y="606.8" text-anchor="middle" textLength="50.5" lengthAdjust="spacingAndGlyphs">Bonaventure</text>
<text class="lbl" x="690.6" y="480" text-anchor="middle" textLength="46.3" lengthAdjust="spacingAndGlyphs">Saint-Elzéar</text>
<text class="lbl" x="854.2" y="427.8" text-anchor="middle" textLength="18.7" lengthAdjust="spacingAndGlyphs">Hope</text>
<text class="lbl" x="808.8" y="562.6" text-anchor="middle" textLength="40" lengthAdjust="spacingAndGlyphs">Paspébiac</text>
<text class="lbl" x="730.5" y="595.5" text-anchor="middle" textLength="49" lengthAdjust="spacingAndGlyphs">New Carlisle</text>
<text class="lbl" x="970" y="516" text-anchor="middle" textLength="58" lengthAdjust="spacingAndGlyphs">Saint-Godefroi</text>
<text class="lbl" x="922.5" y="559" text-anchor="middle" textLength="20" lengthAdjust="spacingAndGlyphs">Hope</text>
<text class="lbl" x="923" y="568.7" text-anchor="middle" textLength="20.7" lengthAdjust="spacingAndGlyphs">Town</text>
<text x="289.5" y="696.3" class="bi" font-size="11.6" fill="#1c63ad" textLength="108.5" lengthAdjust="spacingAndGlyphs">Baie des Chaleurs</text>
<!-- logo -->
<ellipse cx="1107.7" cy="105.2" rx="35.8" ry="32.2" fill="#1b50b0"/>
<polygon points="1107.3,79.1 1106.6,86.7 1103.1,95.2 1096.6,102.7 1090.0,109.2 1083.5,114.4 1091.4,113.2 1099.9,113.9 1105.5,116.2 1108.3,115.0 1116.7,113.2 1124.2,113.9 1125.1,112.0 1133.6,110.6 1137.8,112.0 1138.7,109.2 1136.9,107.8 1134.7,105.5 1133.6,100.8 1130.8,95.2 1126.1,88.6 1120.5,83.9 1114.8,80.0" fill="#fff"/>
<polygon points="1082.1,115.3 1096.1,116.0 1108.3,116.9 1124.2,115.8 1138.3,112.2 1136.9,114.8 1131.7,118.6 1124.2,122.3 1105.5,123.5 1086.7,123.7 1083.5,120.0" fill="#fff"/>
<path d="M1099.4,105.5 L1096.1,112.2 M1105.9,106.9 L1102.5,113.2 M1112.5,102.7 L1108.5,115.3 M1117.2,97 L1117.6,112.5 M1123.3,97 L1124.7,113" stroke="#1b50b0" stroke-width="1.3" fill="none"/>
<path d="M1125.6,101.5 L1126.1,105.5 C1127.5,107.5 1131,107.5 1132.2,105.5 L1132.6,102.7" stroke="#1b50b0" stroke-width="1.7" fill="none"/>
<path d="M1116.7,82.1 C1119,80.5 1122.5,81.5 1123.7,83.5 L1125.1,86.3" stroke="#e8b03a" stroke-width="2.2" fill="none"/>
<path d="M1113.9,88.1 L1115.8,91.4 L1116.7,95.6 M1116.7,90 L1118.1,93.3" stroke="#e8b03a" stroke-width="1" fill="none"/>
<rect x="1106.9" y="74.1" width="8.9" height="5" fill="#fff"/>
<path d="M1108.3,75.2 v2.8 M1110.4,75.2 v2.8 M1112.5,75.2 v2.8 M1114.4,75.2 v2.8" stroke="#1b50b0" stroke-width="0.7"/>
<rect x="1088.1" y="118.7" width="28.6" height="2.5" fill="#e8c45a"/>
<path d="M1084.9,125.6 C1087,124.6 1089.5,124 1091.4,124.2 C1094,124.5 1096.5,126 1098.9,125.9 C1102,125.8 1104.5,124.8 1107.3,124.7 C1110,124.7 1112.5,125.8 1114.8,125.6 C1117.5,125.3 1120,124.2 1122.3,124 C1125,123.8 1127.5,124.3 1129.8,124.2 M1103.6,131 C1106,130 1108,129.4 1110.2,129.4 C1113,129.5 1116,130.5 1118.6,130.3 C1121,130 1122.5,129.2 1124.2,128.7 C1126,128.2 1128,128 1129.8,128" stroke="#fff" stroke-width="1.7" fill="none" stroke-linecap="round"/>
<text class="ser bi" x="1155.5" y="89" font-size="16.5" fill="#1f55a5" textLength="48" lengthAdjust="spacingAndGlyphs">MRC</text>
<text class="ser bi" x="1154.7" y="109.7" font-size="16" fill="#1f55a5" textLength="15.3" lengthAdjust="spacingAndGlyphs">de</text>
<text class="ser bi" x="1154" y="132.4" font-size="16" fill="#1f55a5" textLength="85" lengthAdjust="spacingAndGlyphs">Bonaventure</text>
<!-- legend -->
<rect x="1077.4" y="230.7" width="159.8" height="159.2" fill="#f3ecca" stroke="#000" stroke-width="2"/>
<text x="1131.8" y="250.4" font-size="11" font-weight="bold" fill="#111" textLength="50.6" lengthAdjust="spacingAndGlyphs">Légende</text>
<path d="M1087.5,267 C1090,263.5 1093,264 1096,267.5 C1099,271 1102,270.5 1105.5,267" stroke="#d85a40" stroke-width="0.7" fill="none"/>
<path d="M1087.5,280 C1090,276.5 1093,277.5 1096,281 C1099,284 1102,283.5 1105.5,281.5" stroke="#8a1c1c" stroke-width="2.2" fill="none"/>
<path d="M1087.5,294.5 C1090,291 1093,291.5 1096,295 C1099,298 1102,297.5 1105.5,295.5" stroke="#4a3418" stroke-width="2.6" fill="none"/>
<path d="M1087.5,294.5 C1090,291 1093,291.5 1096,295 C1099,298 1102,297.5 1105.5,295.5" stroke="#c9a35a" stroke-width="1.1" fill="none"/>
<path d="M1087.5,308 C1090,304.5 1093,305 1096,308.5 C1099,311 1102,310.5 1105.5,308.5" stroke="#8c98d8" stroke-width="0.7" fill="none"/>
<g stroke-width="0.5">
<path id="blob" d="M1089.6,318.6 C1091,316.6 1093.5,317.6 1095.5,318.4 C1097,316.4 1100,316.6 1102,317.2 C1104,318 1102.6,320.4 1104.4,322.6 C1105.4,325 1103,326.2 1101,325.4 C1098.5,324.6 1097,326 1094.5,325.6 C1092,325.2 1090,325.8 1089.4,323.6 C1089,321.6 1088.6,320.4 1089.6,318.6 Z" fill="#8fd6a4" stroke="#3f7f58"/>

</g>
<path d="M1089.6,345.6 C1091,343.6 1093.5,344.6 1095.5,345.4 C1097,343.4 1100,343.6 1102,344.2 C1104,345 1102.6,347.4 1104.4,349.6 C1105.4,352 1103,353.2 1101,352.4 C1098.5,351.6 1097,353 1094.5,352.6 C1092,352.2 1090,352.8 1089.4,350.6 C1089,348.6 1088.6,347.4 1089.6,345.6 Z" fill="#cfc818" stroke="#a8a010" stroke-width="0.5"/>
<path d="M1089.6,359.2 C1091,357.2 1093.5,358.2 1095.5,359 C1097,357 1100,357.2 1102,357.8 C1104,358.6 1102.6,361 1104.4,363.2 C1105.4,365.6 1103,366.8 1101,366 C1098.5,365.2 1097,366.6 1094.5,366.2 C1092,365.8 1090,366.4 1089.4,364.2 C1089,362.2 1088.6,361 1089.6,359.2 Z" fill="#9fdcff" stroke="#70b8f0" stroke-width="0.5"/>
<path d="M1089.6,372.8 C1091,370.8 1093.5,371.8 1095.5,372.6 C1097,370.6 1100,370.8 1102,371.4 C1104,372.2 1102.6,374.6 1104.4,376.8 C1105.4,379.2 1103,380.4 1101,379.6 C1098.5,378.8 1097,380.2 1094.5,379.8 C1092,379.4 1090,380 1089.4,377.8 C1089,375.8 1088.6,374.6 1089.6,372.8 Z" fill="#fff" stroke="#222" stroke-width="0.7"/>
<path d="M1089.6,332.1 C1091,330.1 1093.5,331.1 1095.5,331.9 C1097,329.9 1100,330.1 1102,330.7 C1104,331.5 1102.6,333.9 1104.4,336.1 C1105.4,338.5 1103,339.7 1101,338.9 C1098.5,338.1 1097,339.5 1094.5,339.1 C1092,338.7 1090,339.3 1089.4,337.1 C1089,335.1 1088.6,333.9 1089.6,332.1 Z" fill="#4f8f68" stroke="#2f5f48" stroke-width="0.5"/>
<text class="leg" x="1110.9" y="269.6" textLength="44.8" lengthAdjust="spacingAndGlyphs">Réseau routier</text>
<text class="leg" x="1110.9" y="283.1" textLength="47.8" lengthAdjust="spacingAndGlyphs">Route nationale</text>
<text class="leg" x="1110.9" y="296.7" textLength="48.5" lengthAdjust="spacingAndGlyphs">Route régionale</text>
<text class="leg" x="1110.9" y="310.3" textLength="72" lengthAdjust="spacingAndGlyphs">Cours d'eau et ruisseau</text>
<text class="leg" x="1110.9" y="324" textLength="114.6" lengthAdjust="spacingAndGlyphs">Terre publique intramunicipale "2012"</text>
<text class="leg" x="1110.9" y="337.4" textLength="5.4" lengthAdjust="spacingAndGlyphs">Île</text>
<text class="leg" x="1110.9" y="351" textLength="30" lengthAdjust="spacingAndGlyphs">Barachois</text>
<text class="leg" x="1110.9" y="364.5" textLength="39" lengthAdjust="spacingAndGlyphs">Lac et rivière</text>
<text class="leg" x="1110.9" y="378.3" textLength="112.4" lengthAdjust="spacingAndGlyphs">Territoire de la MRC de Bonaventure</text>
<!-- info box -->
<rect x="1072.6" y="452.2" width="168.2" height="58.8" fill="#efe6b8" stroke="#8a8468" stroke-width="0.8"/>
<g class="info" font-weight="bold">
<text x="1156.5" y="457.6">Ministère des Ressources naturelles et de la Faune</text>
<text x="1156.5" y="462.6">© Gouvernement du Québec</text>
<text x="1156.5" y="467.6" textLength="165" lengthAdjust="spacingAndGlyphs">Cette carte intègre de l'information géographique de source gouvernementale.</text>
<text x="1156.5" y="472.6">Pour des besoins de représentation, certaines données ont</text>
<text x="1156.5" y="477.6">subi des transformations et des adaptations</text>
<text x="1156.5" y="482.6">qui ont pu modifier la donnée originale.</text>
<text x="1156.5" y="487.6">MRC de Bonaventure, service de géomatique, 11-2012</text>
<text x="1156.5" y="497.6">Système de référence géodésique : NAD83</text>
<text x="1156.5" y="502.6">Projection cartographique :</text>
<text x="1156.5" y="507.6">MTM (Mercator Transverse Modifiée), zone de 3°, fuseau 5.</text>
</g>
<!-- title box -->
<g class="bi" font-size="9" fill="#111" text-anchor="middle">
<text x="1155.8" y="615.4" textLength="33" lengthAdjust="spacingAndGlyphs">Carte 2</text>
<text x="1155.5" y="635.6" textLength="95" lengthAdjust="spacingAndGlyphs">Localisation des TPI</text>
<text x="1156.6" y="656" textLength="169" lengthAdjust="spacingAndGlyphs">"Terres publiques intramunicipales"</text>
<text x="1156" y="675.6" textLength="137" lengthAdjust="spacingAndGlyphs">dans la MRC de Bonaventure</text>
</g>
<!-- compass -->
<g transform="translate(1155.2,722)">
<circle r="9.6" fill="none" stroke="#222" stroke-width="1.5"/>
<circle r="7.2" fill="none" stroke="#444" stroke-width="0.5"/>
<path d="M0,-12 L1.8,-1.8 L12,0 L1.8,1.8 L0,12 L-1.8,1.8 L-12,0 L-1.8,-1.8 Z" fill="#222"/>
<path d="M0,-12 L0,0 L1.8,-1.8 Z M12,0 L0,0 L1.8,1.8 Z M0,12 L0,0 L-1.8,1.8 Z M-12,0 L0,0 L-1.8,-1.8Z" fill="#fff" stroke="#222" stroke-width="0.3"/>
<path d="M6.5,-6.5 L1.4,0 L0,-1.4 Z M6.5,6.5 L0,1.4 L1.4,0 Z M-6.5,6.5 L-1.4,0 L0,1.4 Z M-6.5,-6.5 L0,-1.4 L-1.4,0 Z" fill="#333"/>
<g class="ser" font-size="4.6" fill="#444" text-anchor="middle"><text x="0" y="-12.6">N</text><text x="0" y="16.6">S</text><text x="-15" y="1.6">W</text><text x="15" y="1.6">E</text></g>
</g>
<text class="bi" x="1114.7" y="756.6" font-size="7.8" fill="#111" textLength="80" lengthAdjust="spacingAndGlyphs">Échelle = 1 : 200 000</text>
<!-- scale bar -->
<rect x="1078" y="773.9" width="148.7" height="3" fill="#000"/>
<rect x="1097.7" y="774.5" width="17.5" height="1.8" fill="#fff"/>
<rect x="1133.6" y="774.5" width="18.2" height="1.8" fill="#fff"/>
<g font-size="4.6" fill="#000" font-weight="bold" text-anchor="middle"><text x="1077.6" y="771.6">0</text><text x="1114.4" y="771.6">2.5</text><text x="1151.8" y="771.6">5</text><text x="1225.6" y="771.6">10</text><text x="1233" y="776.4">Km</text></g>

</g></svg></body></html>
